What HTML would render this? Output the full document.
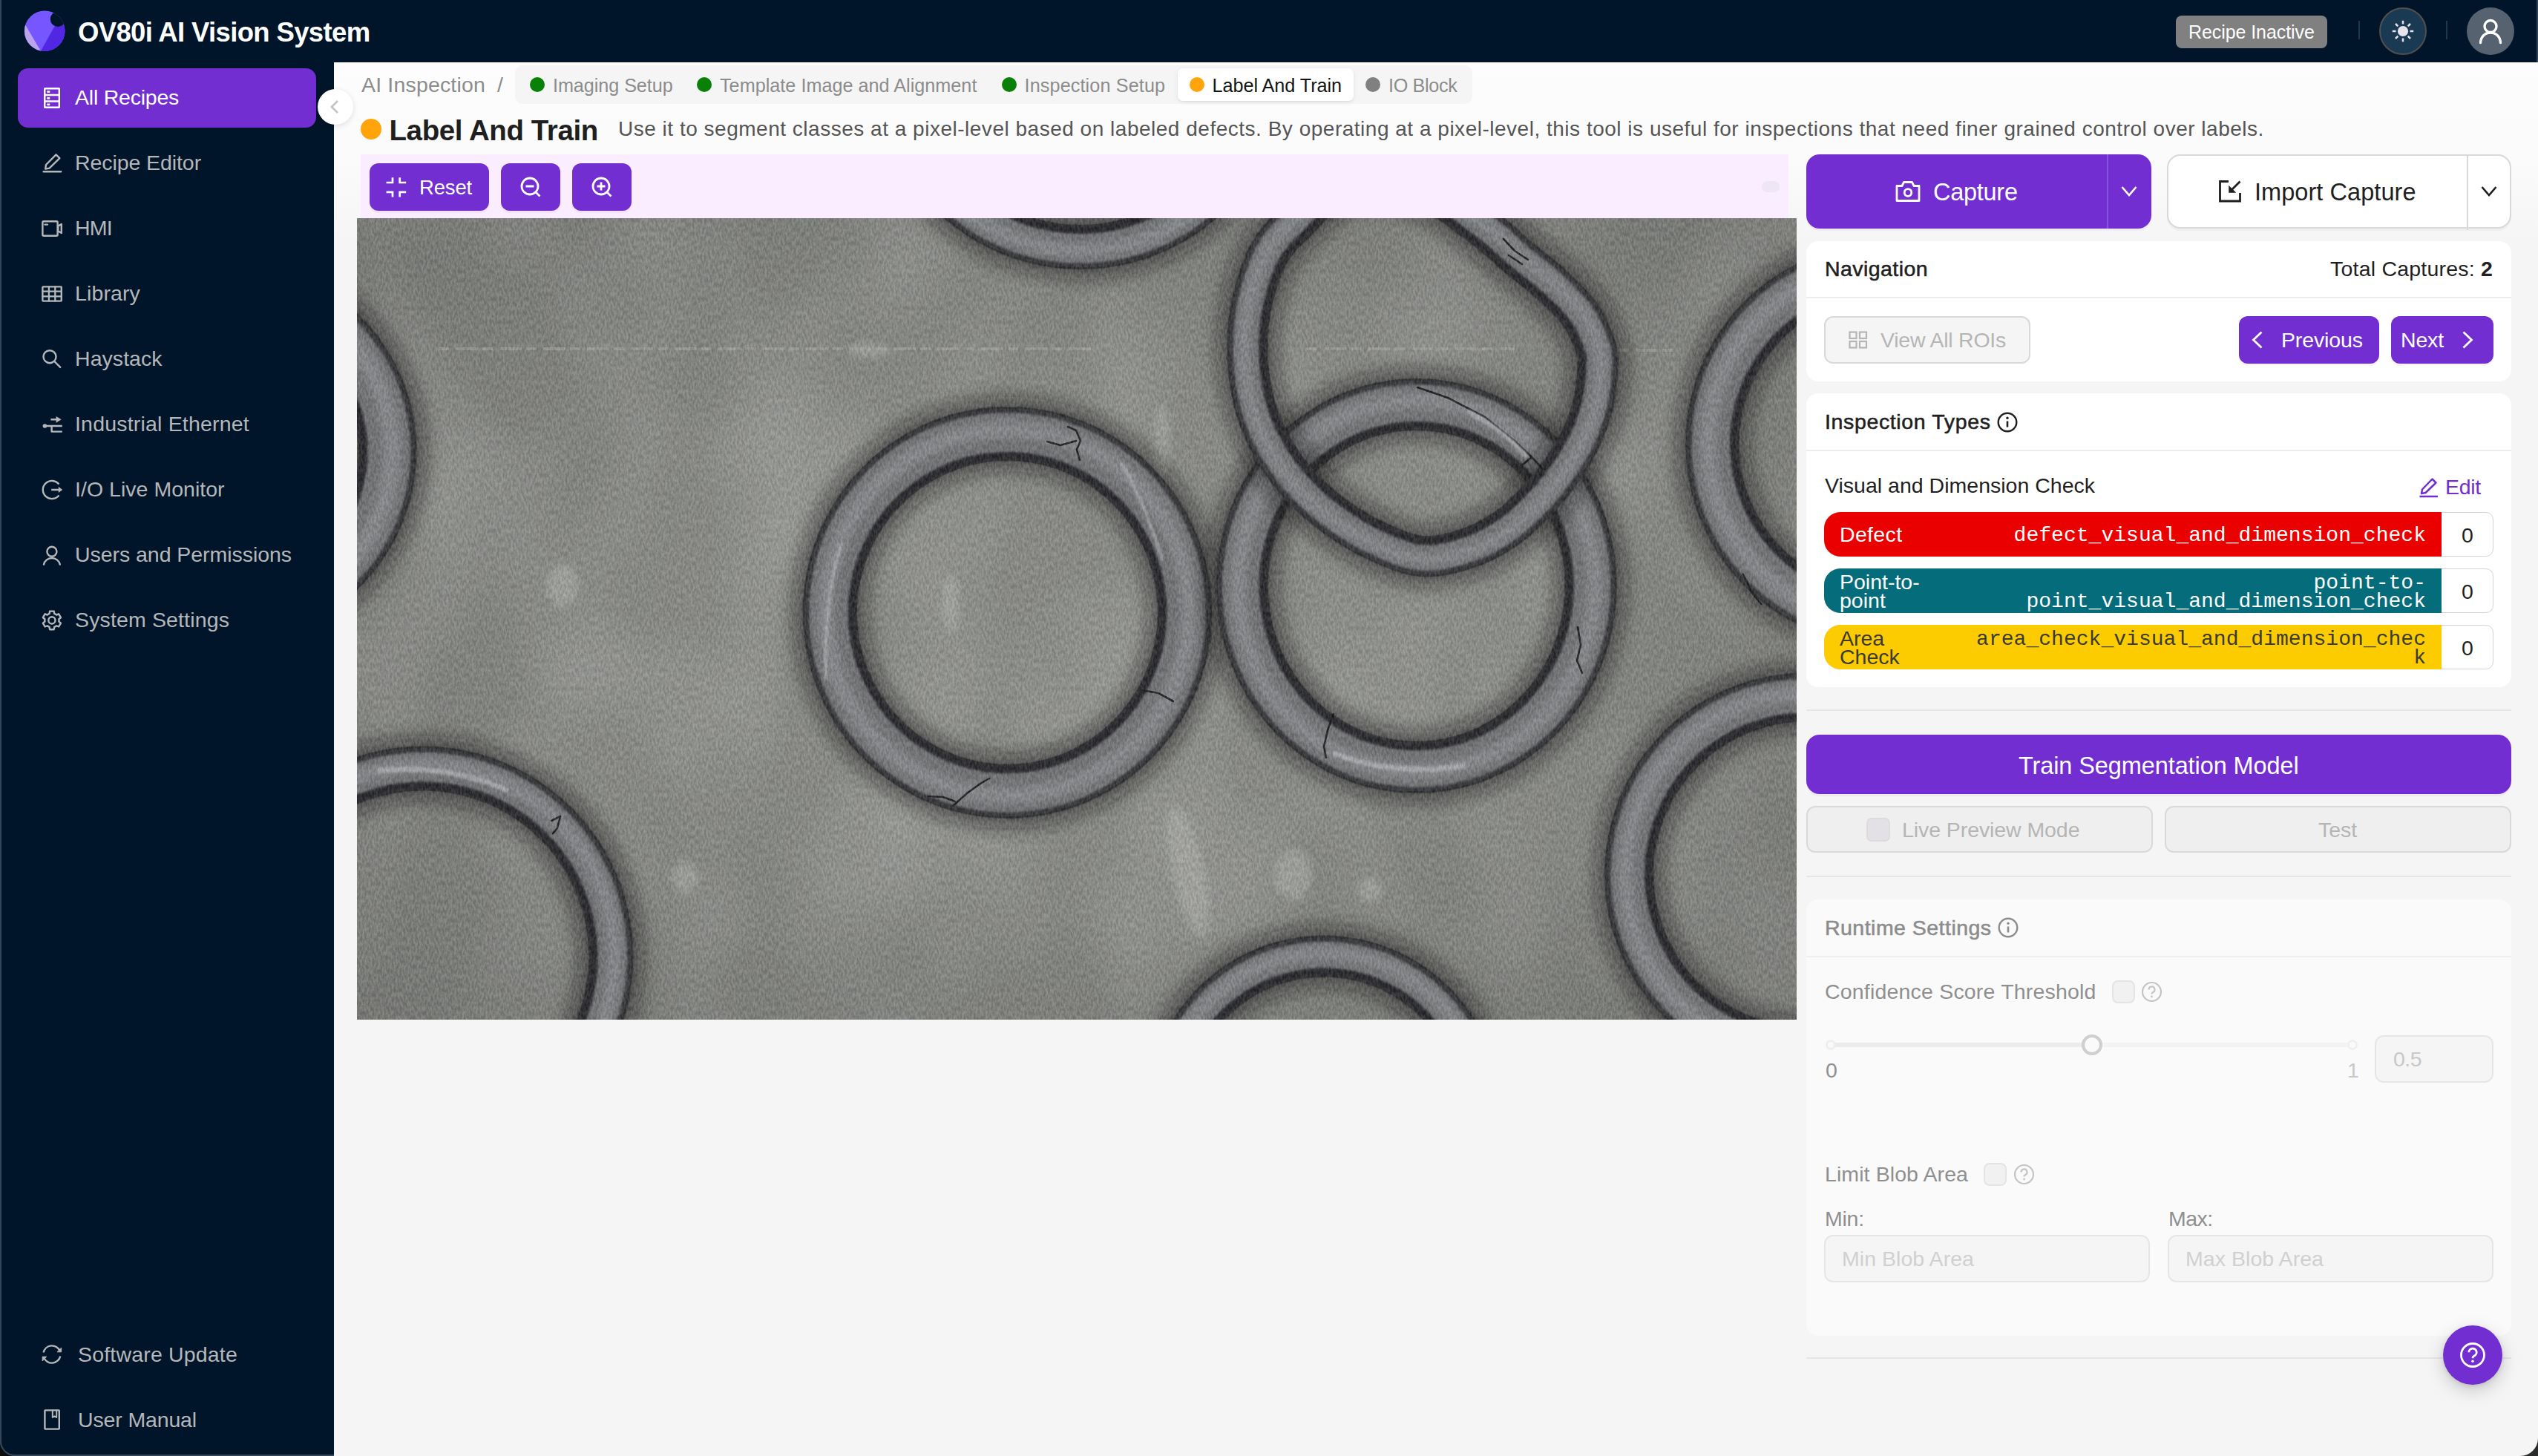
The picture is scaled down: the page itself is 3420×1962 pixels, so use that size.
<!DOCTYPE html>
<html>
<head>
<meta charset="utf-8">
<title>OV80i AI Vision System</title>
<style>
*{box-sizing:border-box;margin:0;padding:0}
html,body{width:3420px;height:1962px;overflow:hidden;background:#001529}
body{font-family:"Liberation Sans",sans-serif;position:relative;color:#1f1f1f}
.abs{position:absolute}
.t{position:absolute;white-space:nowrap;line-height:1}
svg{position:absolute;overflow:visible}
.mono{font-family:"Liberation Mono",monospace}
/* header */
#hdr{position:absolute;left:0;top:0;width:3420px;height:84px;background:#001529}
#side{position:absolute;left:0;top:84px;width:450px;height:1878px;background:#001529}
.mi{position:absolute;left:101px;color:#b5b7ba;font-size:28.5px;margin-top:-0.5px}
.ico{stroke:#b5b7ba;fill:none;stroke-width:2.4;stroke-linecap:round;stroke-linejoin:round}
#content{position:absolute;left:450px;top:84px;width:2970px;height:1878px;background:linear-gradient(#fdfdfd 0,#fbfbfb 120px,#f5f5f5 250px,#f5f5f5 100%)}
.dot{top:104px;width:20px;height:20px;border-radius:50%}
.sg{top:102.500px;font-size:25.2px;color:#8c8c8c}
.pbtn{position:absolute;background:#722ed1;border-radius:12px;box-shadow:0 3px 0 rgba(114,46,209,0.05)}
.card{position:absolute;background:#fff;border-radius:16px}
.hl{position:absolute;height:2px;background:#ececec}
.dis{position:absolute;background:#efefef;border:2px solid #d9d9d9;border-radius:12px}
.dtx{color:#b5b5b5}
.inp{position:absolute;background:#f5f5f5;border:2px solid #e6e6e6;border-radius:12px}
.cb{position:absolute;background:#f1f1f1;border:2px solid #e4e4e4;border-radius:8px}
@media (max-width:1800px){html{zoom:0.5}}
</style>
</head>
<body>
<!--HEADER-->
<div id="hdr">
<svg style="left:32px;top:14px" width="56" height="56" viewBox="32 14 56 56">
<defs><clipPath id="lg"><circle cx="60.2" cy="41.8" r="27.3"/></clipPath></defs>
<g clip-path="url(#lg)">
<rect x="32" y="14" width="56" height="56" fill="#7657ff"/>
<polygon points="30,27 34.300,33.800 54.900,68.700 40,72 28,60" fill="#bba3ee"/>
<polygon points="54.900,68.700 73.400,35.700 90,30 90,72 56,72" fill="#5227e3"/>
<circle cx="78" cy="25.800" r="10.200" fill="#001529"/>
</g></svg>
<span class="t" id="ttl" style="letter-spacing:-0.65px;;;;left:105px;top:25.5px;font-size:36.5px;font-weight:bold;color:#fff">OV80i AI Vision System</span>
<div class="abs" style="left:2932px;top:21px;width:204px;height:44px;border-radius:8px;background:#808080"></div>
<span class="t" id="rin" style="letter-spacing:-0.08px;;;;left:2949px;top:31px;font-size:25px;color:#fff">Recipe Inactive</span>
<div class="abs" style="left:3178px;top:28px;width:2px;height:25px;background:#1b3a50"></div>
<div class="abs" style="left:3206px;top:10px;width:64px;height:64px;border-radius:50%;background:#193a52;border:2px solid #544e4c"></div>
<svg style="left:3222px;top:26px" width="32" height="32" viewBox="0 0 32 32"><circle cx="16" cy="16" r="7.100" fill="#e6e3ee"/><g stroke="#e6e3ee" stroke-width="2.500" stroke-linecap="butt"><path d="M16 1.800v4.700M16 25.500v4.700M1.800 16h4.700M25.500 16h4.700M6 6l3.300 3.300M22.700 22.700l3.300 3.300M6 26l3.300-3.300M22.700 9.300l3.300-3.300"/></g></svg>
<div class="abs" style="left:3296px;top:28px;width:2px;height:25px;background:#1b3a50"></div>
<div class="abs" style="left:3324px;top:10px;width:64px;height:64px;border-radius:50%;background:#566270"></div>
<svg style="left:3338px;top:24px" width="36" height="36" viewBox="0 0 36 36"><g fill="none" stroke="#fff" stroke-width="3.4" stroke-linecap="round"><circle cx="18" cy="11.5" r="8"/><path d="M4.5 33.5c0.5-8 6-13.5 13.5-13.5s13 5.500 13.5 13.500"/></g></svg>
</div>
<!--SIDEBAR-->
<div id="side" style="top:84px">
<div class="abs" style="left:24px;top:8px;width:402px;height:80px;border-radius:14px;background:#722ed1"></div>
<span class="t mi" id="m0" style="letter-spacing:-0.23px;;;;top:33.8px;color:#fff">All Recipes</span>
<span class="t mi" id="m1" style="letter-spacing:-0.08px;;;;top:121.8px;color:#b5b7ba">Recipe Editor</span>
<span class="t mi" id="m2" style="letter-spacing:-0.82px;;;;top:209.8px;color:#b5b7ba">HMI</span>
<span class="t mi" id="m3" style="letter-spacing:0.12px;;;;top:297.8px;color:#b5b7ba">Library</span>
<span class="t mi" id="m4" style="letter-spacing:0.05px;;;;top:385.8px;color:#b5b7ba">Haystack</span>
<span class="t mi" id="m5" style="letter-spacing:0.19px;;;;top:473.8px;color:#b5b7ba">Industrial Ethernet</span>
<span class="t mi" id="m6" style="letter-spacing:0.03px;;;;top:561.8px;color:#b5b7ba">I/O Live Monitor</span>
<span class="t mi" id="m7" style="letter-spacing:-0.05px;;;;top:649.8px;color:#b5b7ba">Users and Permissions</span>
<span class="t mi" id="m8" style="letter-spacing:0.14px;;;;top:737.8px;color:#b5b7ba">System Settings</span>
<span class="t mi" id="m9" style="letter-spacing:0.18px;;;;left:105px;top:1727.8px">Software Update</span>
<span class="t mi" id="m10" style="letter-spacing:-0.14px;;;;left:105px;top:1815.8px">User Manual</span>
<svg style="left:0;top:0" width="450" height="1878" viewBox="0 84 450 1878"><g class="ico"><g stroke="#fff"><rect x="60.2" y="119.2" width="19.6" height="25.6" rx="0.5"/><path d="M60.2 128h19.6M60.2 136.5h19.6" /><path d="M64.5 123.7h1.6M64.5 132.3h1.6M64.5 140.8h1.6" stroke-width="2.8"/></g><path d="M75.5 208.3L80.4 213.2L66.6 226.6L61.2 227.6L62 222.0Z M58.6 231.3H82.2" /><rect x="57.4" y="298.3" width="20.2" height="19.4" rx="1.5"/><path d="M78.3 304.6L82.8 302V314L78.3 311.4Z M60.5 302.6h3.4"/><rect x="57.4" y="386.4" width="25.4" height="19.2" rx="0.8"/><path d="M65.9 386.4v19.200M74.3 386.4v19.2M57.4 392.6h25.400M57.4 399.300h25.4" stroke-width="2.3"/><circle cx="67" cy="480.7" r="8.5"/><path d="M73.3 487L81.200 494.900"/><circle cx="60.400" cy="574" r="2.8" fill="#b5b7ba" stroke="none"/><path d="M60.4 574H83.8M68.4 565.3H77M69.6 574V581.6H83.8" stroke-linecap="butt"/><path d="M75.6 560.900L82.6 565.3L75.6 569.800Z" fill="#b5b7ba" stroke="none"/><path d="M79.43 652.55A12.1 12.1 0 1 0 79.43 667.45 M69.2 660H79.500" stroke-linecap="butt"/><path d="M78.800 655.800L84.200 660L78.800 664.100Z" fill="#b5b7ba" stroke="none"/><circle cx="69.9" cy="743.2" r="6.5"/><path d="M59 760.600A11.2 11.2 0 0 1 80.800 760.600"/><path d="M65.10 827.59 L66.62 826.88 L67.07 823.62 L72.73 823.62 L73.18 826.88 L74.70 827.59 L76.07 828.55 L79.12 827.31 L81.95 832.22 L79.35 834.23 L79.50 835.90 L79.35 837.57 L81.95 839.58 L79.12 844.49 L76.07 843.25 L74.70 844.21 L73.18 844.92 L72.73 848.18 L67.07 848.18 L66.62 844.92 L65.10 844.21 L63.73 843.25 L60.68 844.49 L57.85 839.58 L60.45 837.57 L60.30 835.90 L60.45 834.23 L57.85 832.22 L60.68 827.31 L63.73 828.55Z" stroke-width="2.4"/><circle cx="69.9" cy="835.9" r="4.6"/><path d="M58.55 1822.59A11.6 11.6 0 0 1 80.66 1820.65 M81.25 1827.41A11.6 11.6 0 0 1 59.14 1829.35" stroke-linecap="butt"/><path d="M82.600 1816.400V1821.800H77.400Z M57.200 1833.600V1828.200H62.400Z" fill="#b5b7ba" stroke-width="1"/><rect x="60.4" y="1900.400" width="19.4" height="25.2" rx="0.5"/><path d="M70.8 1900.4V1910L73.500 1908.300L76.200 1910V1900.400" stroke-width="2"/></g></svg>
</div>
<!--CONTENT-->
<div id="content"></div>
<!--MAIN-->
<span class="t" id="bc" style="letter-spacing:0.17px;;;;left:487px;top:100px;font-size:28.5px;color:#8c8c8c">AI Inspection</span>
<span class="t" id="bcs" style="left:670px;top:100px;font-size:28.5px;color:#8c8c8c">/</span>
<div class="abs" style="left:694px;top:88px;width:1290px;height:52px;border-radius:10px;background:#f5f5f5"></div>
<div class="abs" style="left:1587px;top:92px;width:237px;height:44px;border-radius:7px;background:#fff;box-shadow:0 2px 6px rgba(0,0,0,0.07),0 1px 2px rgba(0,0,0,0.05)"></div>
<div class="abs dot" style="left:714px;background:#098109"></div>
<span class="t sg" id="s1" style="letter-spacing:-0.06px;;;;left:745px">Imaging Setup</span>
<div class="abs dot" style="left:939px;background:#098109"></div>
<span class="t sg" id="s2" style="letter-spacing:0.02px;;;;left:970px">Template Image and Alignment</span>
<div class="abs dot" style="left:1350px;background:#098109"></div>
<span class="t sg" id="s3" style="letter-spacing:0.13px;;;;left:1380.5px">Inspection Setup</span>
<div class="abs dot" style="left:1603px;background:#ffa40a"></div>
<span class="t sg" id="s4" style="letter-spacing:-0.03px;;;;left:1633.5px;color:#141414">Label And Train</span>
<div class="abs dot" style="left:1840px;background:#808080"></div>
<span class="t sg" id="s5" style="letter-spacing:-0.34px;;;;left:1871px">IO Block</span>
<div class="abs" style="left:486px;top:160px;width:28px;height:28px;border-radius:50%;background:#ffa40a"></div>
<span class="t" id="h1" style="letter-spacing:-0.4px;;;;left:524.500px;top:156.500px;font-size:38.500px;font-weight:bold;color:#1f1f1f">Label And Train</span>
<span class="t" id="desc" style="letter-spacing:0.51px;;;;left:833px;top:160px;font-size:28px;color:#555">Use it to segment classes at a pixel-level based on labeled defects. By operating at a pixel-level, this tool is useful for inspections that need finer grained control over labels.</span>
<div class="abs" style="left:486px;top:208px;width:1924px;height:86px;background:#faedff"></div>
<div class="pbtn" style="left:498px;top:220px;width:161px;height:64px"></div>
<div class="pbtn" style="left:675px;top:220px;width:80px;height:64px"></div>
<div class="pbtn" style="left:771px;top:220px;width:80px;height:64px"></div>
<svg style="left:519px;top:238px" width="30" height="28" viewBox="0 0 30 28"><g fill="none" stroke="#fff" stroke-width="2.700"><path d="M1.600 8H10V1.200M28.200 8H19.700V1.200M1.600 20.900H10V27.400M28.200 20.900H19.700V27.400"/></g></svg>
<span class="t" id="rst" style="letter-spacing:-0.15px;;;;left:565px;top:238.500px;font-size:27.5px;color:#fff">Reset</span>
<svg style="left:700px;top:237px" width="30" height="30" viewBox="0 0 30 30"><g fill="none" stroke="#fff" stroke-width="2.800"><circle cx="14" cy="14" r="11"/><path d="M8.500 14H19.500M22 22L27.500 27.500"/></g></svg>
<svg style="left:796px;top:237px" width="30" height="30" viewBox="0 0 30 30"><g fill="none" stroke="#fff" stroke-width="2.800"><circle cx="14" cy="14" r="11"/><path d="M8.500 14H19.500M14 8.500V19.500M22 22L27.500 27.500"/></g></svg>
<div class="abs" style="left:2374px;top:244px;width:24px;height:15px;border-radius:7px;background:#efe6f5"></div>
<div class="abs" style="left:428px;top:120px;width:48px;height:48px;border-radius:50%;background:#fff;box-shadow:0 2px 8px rgba(0,0,0,0.12)"></div>
<svg style="left:444px;top:134px" width="14" height="20" viewBox="0 0 14 20"><path d="M11 2L3 10L11 18" fill="none" stroke="#c4c4c4" stroke-width="2.800"/></svg>
<!--IMGSTART-->
<svg style="left:481px;top:294px;overflow:hidden" width="1940" height="1080" viewBox="0 0 1940 1080">
<defs>
<filter id="b14" x="-20%" y="-20%" width="140%" height="140%"><feGaussianBlur stdDeviation="11"/></filter>
<filter id="b6" x="-20%" y="-20%" width="140%" height="140%"><feGaussianBlur stdDeviation="5"/></filter>
<filter id="b2" x="-20%" y="-20%" width="140%" height="140%"><feGaussianBlur stdDeviation="1.6"/></filter>
<filter id="b40" x="-50%" y="-50%" width="200%" height="200%"><feGaussianBlur stdDeviation="14"/></filter>
<filter id="nz" color-interpolation-filters="sRGB" x="0" y="0" width="100%" height="100%"><feTurbulence type="fractalNoise" baseFrequency="0.38 0.16" numOctaves="3" seed="7" result="n"/><feColorMatrix in="n" type="matrix" values="2.2 0 0 0 -0.6  2.2 0 0 0 -0.6  2.2 0 0 0 -0.6  0 0 0 0 1"/></filter>
<filter id="nz2" color-interpolation-filters="sRGB" x="0" y="0" width="100%" height="100%"><feTurbulence type="fractalNoise" baseFrequency="0.006 0.004" numOctaves="2" seed="3" result="n"/><feColorMatrix in="n" type="matrix" values="0 0 0 0 1  0 0 0 0 1  0 0 0 0 1  1.6 0 0 0 -0.62"/></filter>
<radialGradient id="vg" cx="0.5" cy="0.5" r="0.75"><stop offset="0.35" stop-color="#000" stop-opacity="0"/><stop offset="1" stop-color="#000" stop-opacity="0.16"/></radialGradient>
</defs>
<rect width="1940" height="1080" fill="#898b86"/>
<rect width="1940" height="1080" filter="url(#nz2)" opacity="0.2"/>
<rect width="1940" height="1080" fill="url(#vg)"/>
<g fill="#b4b6b0" opacity="0.5" filter="url(#b6)"><ellipse cx="277" cy="495" rx="22" ry="30"/><ellipse cx="442" cy="888" rx="18" ry="22"/><ellipse cx="1120" cy="880" rx="22" ry="90" transform="rotate(-12 1120 880)"/><ellipse cx="1262" cy="885" rx="26" ry="34"/><ellipse cx="1365" cy="905" rx="16" ry="16"/><ellipse cx="690" cy="178" rx="30" ry="10"/><ellipse cx="800" cy="520" rx="12" ry="40"/><ellipse cx="1085" cy="300" rx="10" ry="50"/></g>
<path d="M110 176H1000M1280 176H1560M1700 178H1780" stroke="#a9aba5" stroke-width="4" stroke-dasharray="14 9 30 6" opacity="0.55" fill="none"/>
<g fill="none">
<path d="M41.3 314.3L40.8 328.6L39.4 342.8L37.1 356.8L33.9 370.7L29.7 384.4L24.7 397.7L18.8 410.7L12.1 423.3L4.6 435.4L-3.7 447.0L-12.8 458.0L-22.6 468.4L-33.0 478.2L-44.0 487.3L-55.6 495.6L-67.7 503.1L-80.3 509.8L-93.3 515.7L-106.6 520.7L-120.3 524.9L-134.2 528.1L-148.2 530.4L-162.4 531.8L-176.7 532.3L-191.0 531.8L-205.2 530.4L-219.2 528.1L-233.1 524.9L-246.8 520.7L-260.1 515.7L-273.1 509.8L-285.7 503.1L-297.8 495.6L-309.4 487.3L-320.4 478.2L-330.8 468.4L-340.6 458.0L-349.7 447.0L-358.0 435.4L-365.5 423.3L-372.2 410.7L-378.1 397.7L-383.1 384.4L-387.3 370.7L-390.5 356.8L-392.8 342.8L-394.2 328.6L-394.7 314.3L-394.2 300.0L-392.8 285.8L-390.5 271.8L-387.3 257.9L-383.1 244.2L-378.1 230.9L-372.2 217.9L-365.5 205.3L-358.0 193.2L-349.7 181.6L-340.6 170.6L-330.8 160.2L-320.4 150.4L-309.4 141.3L-297.8 133.0L-285.7 125.5L-273.1 118.8L-260.1 112.9L-246.8 107.9L-233.1 103.7L-219.2 100.5L-205.2 98.2L-191.0 96.8L-176.7 96.3L-162.4 96.8L-148.2 98.2L-134.2 100.5L-120.3 103.7L-106.6 107.9L-93.3 112.9L-80.3 118.8L-67.7 125.5L-55.6 133.0L-44.0 141.3L-33.0 150.4L-22.6 160.2L-12.8 170.6L-3.7 181.6L4.6 193.2L12.1 205.3L18.8 217.9L24.7 230.9L29.7 244.2L33.9 257.9L37.1 271.8L39.4 285.8L40.8 300.0Z" stroke="#161717" stroke-opacity="0.5" stroke-width="105.0" filter="url(#b14)"/>
<path d="M41.3 314.3L40.8 328.6L39.4 342.8L37.1 356.8L33.9 370.7L29.7 384.4L24.7 397.7L18.8 410.7L12.1 423.3L4.6 435.4L-3.7 447.0L-12.8 458.0L-22.6 468.4L-33.0 478.2L-44.0 487.3L-55.6 495.6L-67.7 503.1L-80.3 509.8L-93.3 515.7L-106.6 520.7L-120.3 524.9L-134.2 528.1L-148.2 530.4L-162.4 531.8L-176.7 532.3L-191.0 531.8L-205.2 530.4L-219.2 528.1L-233.1 524.9L-246.8 520.7L-260.1 515.7L-273.1 509.8L-285.7 503.1L-297.8 495.6L-309.4 487.3L-320.4 478.2L-330.8 468.4L-340.6 458.0L-349.7 447.0L-358.0 435.4L-365.5 423.3L-372.2 410.7L-378.1 397.7L-383.1 384.4L-387.3 370.7L-390.5 356.8L-392.8 342.8L-394.2 328.6L-394.7 314.3L-394.2 300.0L-392.8 285.8L-390.5 271.8L-387.3 257.9L-383.1 244.2L-378.1 230.9L-372.2 217.9L-365.5 205.3L-358.0 193.2L-349.7 181.6L-340.6 170.6L-330.8 160.2L-320.4 150.4L-309.4 141.3L-297.8 133.0L-285.7 125.5L-273.1 118.8L-260.1 112.9L-246.8 107.9L-233.1 103.7L-219.2 100.5L-205.2 98.2L-191.0 96.8L-176.7 96.3L-162.4 96.8L-148.2 98.2L-134.2 100.5L-120.3 103.7L-106.6 107.9L-93.3 112.9L-80.3 118.8L-67.7 125.5L-55.6 133.0L-44.0 141.3L-33.0 150.4L-22.6 160.2L-12.8 170.6L-3.7 181.6L4.6 193.2L12.1 205.3L18.8 217.9L24.7 230.9L29.7 244.2L33.9 257.9L37.1 271.8L39.4 285.8L40.8 300.0Z" stroke="#343536" stroke-width="78.0"/>
<path d="M41.3 314.3L40.8 328.6L39.4 342.8L37.1 356.8L33.9 370.7L29.7 384.4L24.7 397.7L18.8 410.7L12.1 423.3L4.6 435.4L-3.7 447.0L-12.8 458.0L-22.6 468.4L-33.0 478.2L-44.0 487.3L-55.6 495.6L-67.7 503.1L-80.3 509.8L-93.3 515.7L-106.6 520.7L-120.3 524.9L-134.2 528.1L-148.2 530.4L-162.4 531.8L-176.7 532.3L-191.0 531.8L-205.2 530.4L-219.2 528.1L-233.1 524.9L-246.8 520.7L-260.1 515.7L-273.1 509.8L-285.7 503.1L-297.8 495.6L-309.4 487.3L-320.4 478.2L-330.8 468.4L-340.6 458.0L-349.7 447.0L-358.0 435.4L-365.5 423.3L-372.2 410.7L-378.1 397.7L-383.1 384.4L-387.3 370.7L-390.5 356.8L-392.8 342.8L-394.2 328.6L-394.7 314.3L-394.2 300.0L-392.8 285.8L-390.5 271.8L-387.3 257.9L-383.1 244.2L-378.1 230.9L-372.2 217.9L-365.5 205.3L-358.0 193.2L-349.7 181.6L-340.6 170.6L-330.8 160.2L-320.4 150.4L-309.4 141.3L-297.8 133.0L-285.7 125.5L-273.1 118.8L-260.1 112.9L-246.8 107.9L-233.1 103.7L-219.2 100.5L-205.2 98.2L-191.0 96.8L-176.7 96.3L-162.4 96.8L-148.2 98.2L-134.2 100.5L-120.3 103.7L-106.6 107.9L-93.3 112.9L-80.3 118.8L-67.7 125.5L-55.6 133.0L-44.0 141.3L-33.0 150.4L-22.6 160.2L-12.8 170.6L-3.7 181.6L4.6 193.2L12.1 205.3L18.8 217.9L24.7 230.9L29.7 244.2L33.9 257.9L37.1 271.8L39.4 285.8L40.8 300.0Z" stroke="#707274" stroke-width="72.0"/>
<path d="M47.3 314.3L46.8 329.0L45.4 343.5L43.0 358.0L39.7 372.3L35.4 386.3L30.2 400.0L24.2 413.4L17.3 426.3L9.5 438.7L1.0 450.7L-8.3 462.0L-18.3 472.7L-29.0 482.7L-40.3 492.0L-52.3 500.5L-64.7 508.3L-77.6 515.2L-91.0 521.2L-104.7 526.4L-118.7 530.7L-133.0 534.0L-147.5 536.4L-162.0 537.8L-176.7 538.3L-191.4 537.8L-205.9 536.4L-220.4 534.0L-234.7 530.7L-248.7 526.4L-262.4 521.2L-275.8 515.2L-288.7 508.3L-301.1 500.5L-313.1 492.0L-324.4 482.7L-335.1 472.7L-345.1 462.0L-354.4 450.7L-362.9 438.7L-370.7 426.3L-377.6 413.4L-383.6 400.0L-388.8 386.3L-393.1 372.3L-396.4 358.0L-398.8 343.5L-400.2 329.0L-400.7 314.3L-400.2 299.6L-398.8 285.1L-396.4 270.6L-393.1 256.3L-388.8 242.3L-383.6 228.6L-377.6 215.2L-370.7 202.3L-362.9 189.9L-354.4 177.9L-345.1 166.6L-335.1 155.9L-324.4 145.9L-313.1 136.6L-301.1 128.1L-288.7 120.3L-275.8 113.4L-262.4 107.4L-248.7 102.2L-234.7 97.9L-220.4 94.6L-205.9 92.2L-191.4 90.8L-176.7 90.3L-162.0 90.8L-147.5 92.2L-133.0 94.6L-118.7 97.9L-104.7 102.2L-91.0 107.4L-77.6 113.4L-64.7 120.3L-52.3 128.1L-40.3 136.6L-29.0 145.9L-18.3 155.9L-8.3 166.6L1.0 177.9L9.5 189.9L17.3 202.3L24.2 215.2L30.2 228.6L35.4 242.3L39.7 256.3L43.0 270.6L45.4 285.1L46.8 299.6Z" stroke="#9c9ea0" stroke-opacity="0.5" stroke-width="24.0" filter="url(#b6)"/>
<path d="M8.8 314.3L8.4 326.4L7.2 338.5L5.2 350.5L2.5 362.3L-1.0 373.9L-5.3 385.3L-10.3 396.3L-16.1 407.0L-22.5 417.4L-29.5 427.2L-37.2 436.6L-45.5 445.5L-54.4 453.8L-63.8 461.5L-73.6 468.5L-84.0 474.9L-94.7 480.7L-105.7 485.7L-117.1 490.0L-128.7 493.5L-140.5 496.2L-152.5 498.2L-164.6 499.4L-176.7 499.8L-188.8 499.4L-200.9 498.2L-212.9 496.2L-224.7 493.5L-236.3 490.0L-247.7 485.7L-258.7 480.7L-269.4 474.9L-279.8 468.5L-289.6 461.5L-299.0 453.8L-307.9 445.5L-316.2 436.6L-323.9 427.2L-330.9 417.4L-337.3 407.1L-343.1 396.3L-348.1 385.3L-352.4 373.9L-355.9 362.3L-358.6 350.5L-360.6 338.5L-361.8 326.4L-362.2 314.3L-361.8 302.2L-360.6 290.1L-358.6 278.1L-355.9 266.3L-352.4 254.7L-348.1 243.3L-343.1 232.3L-337.3 221.6L-330.9 211.2L-323.9 201.4L-316.2 192.0L-307.9 183.1L-299.0 174.8L-289.6 167.1L-279.8 160.1L-269.5 153.7L-258.7 147.9L-247.7 142.9L-236.3 138.6L-224.7 135.1L-212.9 132.4L-200.9 130.4L-188.8 129.2L-176.7 128.8L-164.6 129.2L-152.5 130.4L-140.5 132.4L-128.7 135.1L-117.1 138.6L-105.7 142.9L-94.7 147.9L-83.9 153.7L-73.6 160.1L-63.8 167.1L-54.4 174.8L-45.5 183.1L-37.2 192.0L-29.5 201.4L-22.5 211.2L-16.1 221.5L-10.3 232.3L-5.3 243.3L-1.0 254.7L2.5 266.3L5.2 278.1L7.2 290.1L8.4 302.2Z" stroke="#262829" stroke-opacity="1" stroke-width="11.5" filter="url(#b2)"/>
<path d="M75.8 314.3L75.3 330.8L73.6 347.3L70.9 363.6L67.2 379.7L62.4 395.5L56.6 410.9L49.8 426.0L42.0 440.6L33.2 454.6L23.6 468.0L13.1 480.8L1.8 492.8L-10.2 504.1L-23.0 514.6L-36.4 524.2L-50.4 533.0L-65.0 540.8L-80.1 547.6L-95.5 553.4L-111.3 558.2L-127.4 561.9L-143.7 564.6L-160.2 566.3L-176.7 566.8L-193.2 566.3L-209.7 564.6L-226.0 561.9L-242.1 558.2L-257.9 553.4L-273.3 547.6L-288.4 540.8L-302.9 533.0L-317.0 524.2L-330.4 514.6L-343.2 504.1L-355.2 492.8L-366.5 480.8L-377.0 468.0L-386.6 454.6L-395.4 440.6L-403.2 426.0L-410.0 410.9L-415.8 395.5L-420.6 379.7L-424.3 363.6L-427.0 347.3L-428.7 330.8L-429.2 314.3L-428.7 297.8L-427.0 281.3L-424.3 265.0L-420.6 248.9L-415.8 233.1L-410.0 217.7L-403.2 202.6L-395.4 188.1L-386.6 174.0L-377.0 160.6L-366.5 147.8L-355.2 135.8L-343.2 124.5L-330.4 114.0L-317.0 104.4L-303.0 95.6L-288.4 87.8L-273.3 81.0L-257.9 75.2L-242.1 70.4L-226.0 66.7L-209.7 64.0L-193.2 62.3L-176.7 61.8L-160.2 62.3L-143.7 64.0L-127.4 66.7L-111.3 70.4L-95.5 75.2L-80.1 81.0L-65.0 87.8L-50.4 95.6L-36.4 104.4L-23.0 114.0L-10.2 124.5L1.8 135.8L13.1 147.8L23.6 160.6L33.2 174.0L42.0 188.0L49.8 202.6L56.6 217.7L62.4 233.1L67.2 248.9L70.9 265.0L73.6 281.3L75.3 297.8Z" stroke="#2a2c2d" stroke-opacity="0.85" stroke-width="7.5" filter="url(#b2)"/>
<path d="M1224.8 -211.0L1224.3 -194.6L1222.7 -178.4L1220.0 -162.2L1216.3 -146.3L1211.5 -130.6L1205.8 -115.3L1199.0 -100.4L1191.3 -86.0L1182.7 -72.1L1173.1 -58.8L1162.8 -46.2L1151.6 -34.2L1139.6 -23.0L1127.0 -12.7L1113.7 -3.1L1099.8 5.5L1085.4 13.2L1070.5 20.0L1055.2 25.7L1039.5 30.5L1023.6 34.2L1007.4 36.9L991.2 38.5L974.8 39.0L958.4 38.5L942.2 36.9L926.0 34.2L910.1 30.5L894.4 25.7L879.1 20.0L864.2 13.2L849.8 5.5L835.9 -3.1L822.6 -12.7L810.0 -23.0L798.0 -34.2L786.8 -46.2L776.5 -58.8L766.9 -72.1L758.3 -86.0L750.6 -100.4L743.8 -115.3L738.1 -130.6L733.3 -146.3L729.6 -162.2L726.9 -178.4L725.3 -194.6L724.8 -211.0L725.3 -227.4L726.9 -243.6L729.6 -259.8L733.3 -275.7L738.1 -291.4L743.8 -306.7L750.6 -321.6L758.3 -336.0L766.9 -349.9L776.5 -363.2L786.8 -375.8L798.0 -387.8L810.0 -399.0L822.6 -409.3L835.9 -418.9L849.8 -427.5L864.2 -435.2L879.1 -442.0L894.4 -447.7L910.1 -452.5L926.0 -456.2L942.2 -458.9L958.4 -460.5L974.8 -461.0L991.2 -460.5L1007.4 -458.9L1023.6 -456.2L1039.5 -452.5L1055.2 -447.7L1070.5 -442.0L1085.4 -435.2L1099.8 -427.5L1113.7 -418.9L1127.0 -409.3L1139.6 -399.0L1151.6 -387.8L1162.8 -375.8L1173.1 -363.2L1182.7 -349.9L1191.3 -336.0L1199.0 -321.6L1205.8 -306.7L1211.5 -291.4L1216.3 -275.7L1220.0 -259.8L1222.7 -243.6L1224.3 -227.4Z" stroke="#161717" stroke-opacity="0.5" stroke-width="87.0" filter="url(#b14)"/>
<path d="M1224.8 -211.0L1224.3 -194.6L1222.7 -178.4L1220.0 -162.2L1216.3 -146.3L1211.5 -130.6L1205.8 -115.3L1199.0 -100.4L1191.3 -86.0L1182.7 -72.1L1173.1 -58.8L1162.8 -46.2L1151.6 -34.2L1139.6 -23.0L1127.0 -12.7L1113.7 -3.1L1099.8 5.5L1085.4 13.2L1070.5 20.0L1055.2 25.7L1039.5 30.5L1023.6 34.2L1007.4 36.9L991.2 38.5L974.8 39.0L958.4 38.5L942.2 36.9L926.0 34.2L910.1 30.5L894.4 25.7L879.1 20.0L864.2 13.2L849.8 5.5L835.9 -3.1L822.6 -12.7L810.0 -23.0L798.0 -34.2L786.8 -46.2L776.5 -58.8L766.9 -72.1L758.3 -86.0L750.6 -100.4L743.8 -115.3L738.1 -130.6L733.3 -146.3L729.6 -162.2L726.9 -178.4L725.3 -194.6L724.8 -211.0L725.3 -227.4L726.9 -243.6L729.6 -259.8L733.3 -275.7L738.1 -291.4L743.8 -306.7L750.6 -321.6L758.3 -336.0L766.9 -349.9L776.5 -363.2L786.8 -375.8L798.0 -387.8L810.0 -399.0L822.6 -409.3L835.9 -418.9L849.8 -427.5L864.2 -435.2L879.1 -442.0L894.4 -447.7L910.1 -452.5L926.0 -456.2L942.2 -458.9L958.4 -460.5L974.8 -461.0L991.2 -460.5L1007.4 -458.9L1023.6 -456.2L1039.5 -452.5L1055.2 -447.7L1070.5 -442.0L1085.4 -435.2L1099.8 -427.5L1113.7 -418.9L1127.0 -409.3L1139.6 -399.0L1151.6 -387.8L1162.8 -375.8L1173.1 -363.2L1182.7 -349.9L1191.3 -336.0L1199.0 -321.6L1205.8 -306.7L1211.5 -291.4L1216.3 -275.7L1220.0 -259.8L1222.7 -243.6L1224.3 -227.4Z" stroke="#343536" stroke-width="60.0"/>
<path d="M1224.8 -211.0L1224.3 -194.6L1222.7 -178.4L1220.0 -162.2L1216.3 -146.3L1211.5 -130.6L1205.8 -115.3L1199.0 -100.4L1191.3 -86.0L1182.7 -72.1L1173.1 -58.8L1162.8 -46.2L1151.6 -34.2L1139.6 -23.0L1127.0 -12.7L1113.7 -3.1L1099.8 5.5L1085.4 13.2L1070.5 20.0L1055.2 25.7L1039.5 30.5L1023.6 34.2L1007.4 36.9L991.2 38.5L974.8 39.0L958.4 38.5L942.2 36.9L926.0 34.2L910.1 30.5L894.4 25.7L879.1 20.0L864.2 13.2L849.8 5.5L835.9 -3.1L822.6 -12.7L810.0 -23.0L798.0 -34.2L786.8 -46.2L776.5 -58.8L766.9 -72.1L758.3 -86.0L750.6 -100.4L743.8 -115.3L738.1 -130.6L733.3 -146.3L729.6 -162.2L726.9 -178.4L725.3 -194.6L724.8 -211.0L725.3 -227.4L726.9 -243.6L729.6 -259.8L733.3 -275.7L738.1 -291.4L743.8 -306.7L750.6 -321.6L758.3 -336.0L766.9 -349.9L776.5 -363.2L786.8 -375.8L798.0 -387.8L810.0 -399.0L822.6 -409.3L835.9 -418.9L849.8 -427.5L864.2 -435.2L879.1 -442.0L894.4 -447.7L910.1 -452.5L926.0 -456.2L942.2 -458.9L958.4 -460.5L974.8 -461.0L991.2 -460.5L1007.4 -458.9L1023.6 -456.2L1039.5 -452.5L1055.2 -447.7L1070.5 -442.0L1085.4 -435.2L1099.8 -427.5L1113.7 -418.9L1127.0 -409.3L1139.6 -399.0L1151.6 -387.8L1162.8 -375.8L1173.1 -363.2L1182.7 -349.9L1191.3 -336.0L1199.0 -321.6L1205.8 -306.7L1211.5 -291.4L1216.3 -275.7L1220.0 -259.8L1222.7 -243.6L1224.3 -227.4Z" stroke="#707274" stroke-width="54.0"/>
<path d="M1229.4 -211.0L1228.8 -194.4L1227.2 -177.8L1224.5 -161.3L1220.7 -145.1L1215.9 -129.2L1210.0 -113.6L1203.1 -98.4L1195.3 -83.7L1186.5 -69.6L1176.8 -56.0L1166.2 -43.2L1154.8 -31.0L1142.6 -19.6L1129.8 -9.0L1116.2 0.7L1102.1 9.5L1087.4 17.3L1072.2 24.2L1056.6 30.1L1040.7 34.9L1024.5 38.7L1008.0 41.4L991.4 43.0L974.8 43.6L958.2 43.0L941.6 41.4L925.1 38.7L908.9 34.9L893.0 30.1L877.4 24.2L862.2 17.3L847.5 9.5L833.4 0.7L819.8 -9.0L807.0 -19.6L794.8 -31.0L783.4 -43.2L772.8 -56.0L763.1 -69.6L754.3 -83.7L746.5 -98.4L739.6 -113.6L733.7 -129.2L728.9 -145.1L725.1 -161.3L722.4 -177.8L720.8 -194.4L720.2 -211.0L720.8 -227.6L722.4 -244.2L725.1 -260.7L728.9 -276.9L733.7 -292.8L739.6 -308.4L746.5 -323.6L754.3 -338.3L763.1 -352.4L772.8 -366.0L783.4 -378.8L794.8 -391.0L807.0 -402.4L819.8 -413.0L833.4 -422.7L847.5 -431.5L862.2 -439.3L877.4 -446.2L893.0 -452.1L908.9 -456.9L925.1 -460.7L941.6 -463.4L958.2 -465.0L974.8 -465.6L991.4 -465.0L1008.0 -463.4L1024.5 -460.7L1040.7 -456.9L1056.6 -452.1L1072.2 -446.2L1087.4 -439.3L1102.1 -431.5L1116.2 -422.7L1129.8 -413.0L1142.6 -402.4L1154.8 -391.0L1166.2 -378.8L1176.8 -366.0L1186.5 -352.4L1195.3 -338.3L1203.1 -323.6L1210.0 -308.4L1215.9 -292.8L1220.7 -276.9L1224.5 -260.7L1227.2 -244.2L1228.8 -227.6Z" stroke="#9c9ea0" stroke-opacity="0.5" stroke-width="18.2" filter="url(#b6)"/>
<path d="M1201.3 -211.0L1200.8 -196.2L1199.4 -181.4L1196.9 -166.8L1193.6 -152.4L1189.3 -138.2L1184.1 -124.3L1177.9 -110.8L1171.0 -97.8L1163.1 -85.2L1154.5 -73.1L1145.1 -61.7L1135.0 -50.8L1124.1 -40.7L1112.7 -31.3L1100.6 -22.7L1088.0 -14.8L1075.0 -7.9L1061.5 -1.7L1047.6 3.5L1033.4 7.8L1019.0 11.1L1004.4 13.6L989.6 15.0L974.8 15.5L960.0 15.0L945.2 13.6L930.6 11.1L916.2 7.8L902.0 3.5L888.1 -1.7L874.6 -7.9L861.5 -14.8L849.0 -22.7L836.9 -31.3L825.5 -40.7L814.6 -50.8L804.5 -61.7L795.1 -73.1L786.5 -85.2L778.6 -97.8L771.7 -110.8L765.5 -124.3L760.3 -138.2L756.0 -152.4L752.7 -166.8L750.2 -181.4L748.8 -196.2L748.3 -211.0L748.8 -225.8L750.2 -240.6L752.7 -255.2L756.0 -269.6L760.3 -283.8L765.5 -297.7L771.7 -311.2L778.6 -324.2L786.5 -336.8L795.1 -348.9L804.5 -360.3L814.6 -371.2L825.5 -381.3L836.9 -390.7L849.0 -399.3L861.5 -407.2L874.6 -414.1L888.1 -420.3L902.0 -425.5L916.2 -429.8L930.6 -433.1L945.2 -435.6L960.0 -437.0L974.8 -437.5L989.6 -437.0L1004.4 -435.6L1019.0 -433.1L1033.4 -429.8L1047.6 -425.5L1061.5 -420.3L1075.0 -414.1L1088.0 -407.2L1100.6 -399.3L1112.7 -390.7L1124.1 -381.3L1135.0 -371.2L1145.1 -360.3L1154.5 -348.9L1163.1 -336.8L1171.0 -324.3L1177.9 -311.2L1184.1 -297.7L1189.3 -283.8L1193.6 -269.6L1196.9 -255.2L1199.4 -240.6L1200.8 -225.8Z" stroke="#262829" stroke-opacity="1" stroke-width="11.5" filter="url(#b2)"/>
<path d="M1250.3 -211.0L1249.7 -193.0L1247.9 -175.0L1245.0 -157.3L1240.9 -139.7L1235.7 -122.4L1229.3 -105.6L1221.9 -89.1L1213.4 -73.2L1203.9 -57.9L1193.4 -43.3L1181.9 -29.4L1169.6 -16.2L1156.4 -3.9L1142.5 7.6L1127.9 18.1L1112.5 27.6L1096.7 36.1L1080.2 43.5L1063.4 49.9L1046.1 55.1L1028.5 59.2L1010.8 62.1L992.8 63.9L974.8 64.5L956.8 63.9L938.8 62.1L921.1 59.2L903.5 55.1L886.2 49.9L869.4 43.5L852.9 36.1L837.0 27.6L821.7 18.1L807.1 7.6L793.2 -3.9L780.0 -16.2L767.7 -29.4L756.2 -43.3L745.7 -57.9L736.2 -73.3L727.7 -89.1L720.3 -105.6L713.9 -122.4L708.7 -139.7L704.6 -157.3L701.7 -175.0L699.9 -193.0L699.3 -211.0L699.9 -229.0L701.7 -247.0L704.6 -264.7L708.7 -282.3L713.9 -299.6L720.3 -316.4L727.7 -332.9L736.2 -348.7L745.7 -364.1L756.2 -378.7L767.7 -392.6L780.0 -405.8L793.2 -418.1L807.1 -429.6L821.7 -440.1L837.0 -449.6L852.9 -458.1L869.4 -465.5L886.2 -471.9L903.5 -477.1L921.1 -481.2L938.8 -484.1L956.8 -485.9L974.8 -486.5L992.8 -485.9L1010.8 -484.1L1028.5 -481.2L1046.1 -477.1L1063.4 -471.9L1080.2 -465.5L1096.7 -458.1L1112.5 -449.6L1127.9 -440.1L1142.5 -429.6L1156.4 -418.1L1169.6 -405.8L1181.9 -392.6L1193.4 -378.7L1203.9 -364.1L1213.4 -348.8L1221.9 -332.9L1229.3 -316.4L1235.7 -299.6L1240.9 -282.3L1245.0 -264.7L1247.9 -247.0L1249.7 -229.0Z" stroke="#2a2c2d" stroke-opacity="0.85" stroke-width="7.5" filter="url(#b2)"/>
<path d="M1115.7 531.4L1115.2 547.2L1113.7 562.9L1111.1 578.4L1107.5 593.8L1103.0 608.9L1097.5 623.6L1091.0 638.0L1083.7 651.9L1075.4 665.3L1066.3 678.1L1056.3 690.3L1045.6 701.8L1034.2 712.6L1022.1 722.6L1009.4 731.8L996.1 740.1L982.3 747.5L968.0 754.1L953.4 759.6L938.4 764.2L923.2 767.8L907.7 770.3L892.1 771.9L876.5 772.4L860.9 771.9L845.3 770.3L829.8 767.8L814.6 764.2L799.6 759.6L785.0 754.1L770.7 747.5L756.9 740.1L743.6 731.8L730.9 722.6L718.8 712.6L707.4 701.8L696.7 690.3L686.7 678.1L677.6 665.3L669.3 651.9L662.0 638.0L655.5 623.6L650.0 608.9L645.5 593.8L641.9 578.4L639.3 562.9L637.8 547.2L637.3 531.4L637.8 515.6L639.3 499.9L641.9 484.4L645.5 469.0L650.0 453.9L655.5 439.2L662.0 424.8L669.3 410.9L677.6 397.5L686.7 384.7L696.7 372.5L707.4 361.0L718.8 350.2L730.9 340.2L743.6 331.0L756.9 322.7L770.7 315.3L785.0 308.7L799.6 303.2L814.6 298.6L829.8 295.0L845.3 292.5L860.9 290.9L876.5 290.4L892.1 290.9L907.7 292.5L923.2 295.0L938.4 298.6L953.4 303.2L968.0 308.7L982.3 315.3L996.1 322.7L1009.4 331.0L1022.1 340.2L1034.2 350.2L1045.6 361.0L1056.3 372.5L1066.3 384.7L1075.4 397.5L1083.7 410.9L1091.0 424.8L1097.5 439.2L1103.0 453.9L1107.5 469.0L1111.1 484.4L1113.7 499.9L1115.2 515.6Z" stroke="#161717" stroke-opacity="0.5" stroke-width="100.0" filter="url(#b14)"/>
<path d="M1115.7 531.4L1115.2 547.2L1113.7 562.9L1111.1 578.4L1107.5 593.8L1103.0 608.9L1097.5 623.6L1091.0 638.0L1083.7 651.9L1075.4 665.3L1066.3 678.1L1056.3 690.3L1045.6 701.8L1034.2 712.6L1022.1 722.6L1009.4 731.8L996.1 740.1L982.3 747.5L968.0 754.1L953.4 759.6L938.4 764.2L923.2 767.8L907.7 770.3L892.1 771.9L876.5 772.4L860.9 771.9L845.3 770.3L829.8 767.8L814.6 764.2L799.6 759.6L785.0 754.1L770.7 747.5L756.9 740.1L743.6 731.8L730.9 722.6L718.8 712.6L707.4 701.8L696.7 690.3L686.7 678.1L677.6 665.3L669.3 651.9L662.0 638.0L655.5 623.6L650.0 608.9L645.5 593.8L641.9 578.4L639.3 562.9L637.8 547.2L637.3 531.4L637.8 515.6L639.3 499.9L641.9 484.4L645.5 469.0L650.0 453.9L655.5 439.2L662.0 424.8L669.3 410.9L677.6 397.5L686.7 384.7L696.7 372.5L707.4 361.0L718.8 350.2L730.9 340.2L743.6 331.0L756.9 322.7L770.7 315.3L785.0 308.7L799.6 303.2L814.6 298.6L829.8 295.0L845.3 292.5L860.9 290.9L876.5 290.4L892.1 290.9L907.7 292.5L923.2 295.0L938.4 298.6L953.4 303.2L968.0 308.7L982.3 315.3L996.1 322.7L1009.4 331.0L1022.1 340.2L1034.2 350.2L1045.6 361.0L1056.3 372.5L1066.3 384.7L1075.4 397.5L1083.7 410.9L1091.0 424.8L1097.5 439.2L1103.0 453.9L1107.5 469.0L1111.1 484.4L1113.7 499.9L1115.2 515.6Z" stroke="#343536" stroke-width="73.0"/>
<path d="M1115.7 531.4L1115.2 547.2L1113.7 562.9L1111.1 578.4L1107.5 593.8L1103.0 608.9L1097.5 623.6L1091.0 638.0L1083.7 651.9L1075.4 665.3L1066.3 678.1L1056.3 690.3L1045.6 701.8L1034.2 712.6L1022.1 722.6L1009.4 731.8L996.1 740.1L982.3 747.5L968.0 754.1L953.4 759.6L938.4 764.2L923.2 767.8L907.7 770.3L892.1 771.9L876.5 772.4L860.9 771.9L845.3 770.3L829.8 767.8L814.6 764.2L799.6 759.6L785.0 754.1L770.7 747.5L756.9 740.1L743.6 731.8L730.9 722.6L718.8 712.6L707.4 701.8L696.7 690.3L686.7 678.1L677.6 665.3L669.3 651.9L662.0 638.0L655.5 623.6L650.0 608.9L645.5 593.8L641.9 578.4L639.3 562.9L637.8 547.2L637.3 531.4L637.8 515.6L639.3 499.9L641.9 484.4L645.5 469.0L650.0 453.9L655.5 439.2L662.0 424.8L669.3 410.9L677.6 397.5L686.7 384.7L696.7 372.5L707.4 361.0L718.8 350.2L730.9 340.2L743.6 331.0L756.9 322.7L770.7 315.3L785.0 308.7L799.6 303.2L814.6 298.6L829.8 295.0L845.3 292.5L860.9 290.9L876.5 290.4L892.1 290.9L907.7 292.5L923.2 295.0L938.4 298.6L953.4 303.2L968.0 308.7L982.3 315.3L996.1 322.7L1009.4 331.0L1022.1 340.2L1034.2 350.2L1045.6 361.0L1056.3 372.5L1066.3 384.7L1075.4 397.5L1083.7 410.9L1091.0 424.8L1097.5 439.2L1103.0 453.9L1107.5 469.0L1111.1 484.4L1113.7 499.9L1115.2 515.6Z" stroke="#707274" stroke-width="67.0"/>
<path d="M1121.3 531.4L1120.8 547.5L1119.2 563.6L1116.6 579.5L1113.0 595.2L1108.3 610.7L1102.7 625.8L1096.1 640.5L1088.5 654.7L1080.1 668.4L1070.7 681.5L1060.6 694.0L1049.6 705.8L1037.9 716.8L1025.5 727.0L1012.5 736.4L998.9 745.0L984.8 752.6L970.2 759.2L955.2 764.9L939.9 769.6L924.3 773.3L908.5 775.9L892.5 777.5L876.5 778.0L860.5 777.5L844.5 775.9L828.7 773.3L813.1 769.6L797.8 764.9L782.8 759.2L768.2 752.6L754.1 745.0L740.5 736.4L727.5 727.0L715.1 716.8L703.4 705.8L692.4 694.0L682.3 681.5L672.9 668.4L664.5 654.7L656.9 640.5L650.3 625.8L644.7 610.7L640.0 595.2L636.4 579.5L633.8 563.6L632.2 547.5L631.7 531.4L632.2 515.3L633.8 499.2L636.4 483.3L640.0 467.6L644.7 452.1L650.3 437.0L656.9 422.3L664.5 408.1L672.9 394.4L682.3 381.3L692.4 368.8L703.4 357.0L715.1 346.0L727.5 335.8L740.5 326.4L754.1 317.8L768.2 310.2L782.8 303.6L797.8 297.9L813.1 293.2L828.7 289.5L844.5 286.9L860.5 285.3L876.5 284.8L892.5 285.3L908.5 286.9L924.3 289.5L939.9 293.2L955.2 297.9L970.2 303.6L984.8 310.2L998.9 317.8L1012.5 326.4L1025.5 335.8L1037.9 346.0L1049.6 357.0L1060.6 368.8L1070.7 381.3L1080.1 394.4L1088.5 408.1L1096.1 422.3L1102.7 437.0L1108.3 452.1L1113.0 467.6L1116.6 483.3L1119.2 499.2L1120.8 515.3Z" stroke="#9c9ea0" stroke-opacity="0.5" stroke-width="22.4" filter="url(#b6)"/>
<path d="M1085.7 531.4L1085.3 545.2L1083.9 559.0L1081.7 572.6L1078.6 586.1L1074.6 599.3L1069.7 612.2L1064.1 624.8L1057.6 637.0L1050.4 648.7L1042.4 659.9L1033.7 670.6L1024.3 680.7L1014.4 690.1L1003.8 698.9L992.6 706.9L981.0 714.2L968.9 720.7L956.5 726.4L943.7 731.2L930.6 735.2L917.3 738.4L903.8 740.6L890.2 741.9L876.5 742.4L862.8 741.9L849.2 740.6L835.7 738.4L822.4 735.2L809.3 731.2L796.5 726.4L784.1 720.7L772.0 714.2L760.4 706.9L749.2 698.9L738.6 690.1L728.7 680.7L719.3 670.6L710.6 659.9L702.6 648.7L695.4 637.0L688.9 624.8L683.3 612.2L678.4 599.3L674.4 586.1L671.3 572.6L669.1 559.0L667.7 545.2L667.3 531.4L667.7 517.6L669.1 503.8L671.3 490.2L674.4 476.7L678.4 463.5L683.3 450.6L688.9 438.0L695.4 425.8L702.6 414.1L710.6 402.9L719.3 392.2L728.7 382.1L738.6 372.7L749.2 363.9L760.4 355.9L772.0 348.6L784.1 342.1L796.5 336.4L809.3 331.6L822.4 327.6L835.7 324.4L849.2 322.2L862.8 320.9L876.5 320.4L890.2 320.9L903.8 322.2L917.3 324.4L930.6 327.6L943.7 331.6L956.5 336.4L968.9 342.1L981.0 348.6L992.6 355.9L1003.8 363.9L1014.4 372.7L1024.3 382.1L1033.7 392.2L1042.4 402.9L1050.4 414.1L1057.6 425.8L1064.1 438.0L1069.7 450.6L1074.6 463.5L1078.6 476.7L1081.7 490.2L1083.9 503.8L1085.3 517.6Z" stroke="#262829" stroke-opacity="1" stroke-width="11.5" filter="url(#b2)"/>
<path d="M1147.7 531.4L1147.1 549.2L1145.4 567.0L1142.5 584.6L1138.5 602.0L1133.3 619.1L1127.1 635.8L1119.8 652.1L1111.4 667.8L1102.1 683.0L1091.7 697.5L1080.5 711.3L1068.4 724.4L1055.4 736.6L1041.7 747.9L1027.3 758.3L1012.2 767.8L996.5 776.2L980.4 783.6L963.7 789.9L946.7 795.1L929.5 799.1L911.9 802.1L894.3 803.8L876.5 804.4L858.7 803.8L841.1 802.1L823.5 799.1L806.3 795.1L789.3 789.9L772.6 783.6L756.5 776.2L740.8 767.8L725.7 758.3L711.3 747.9L697.6 736.6L684.6 724.4L672.5 711.3L661.3 697.5L650.9 683.0L641.6 667.8L633.2 652.1L625.9 635.8L619.7 619.1L614.5 602.0L610.5 584.6L607.6 567.0L605.9 549.2L605.3 531.4L605.9 513.6L607.6 495.8L610.5 478.2L614.5 460.8L619.7 443.7L625.9 427.0L633.2 410.7L641.6 395.0L650.9 379.8L661.3 365.3L672.5 351.5L684.6 338.4L697.6 326.2L711.3 314.9L725.7 304.5L740.8 295.0L756.5 286.6L772.6 279.2L789.3 272.9L806.3 267.7L823.5 263.7L841.1 260.7L858.7 259.0L876.5 258.4L894.3 259.0L911.9 260.7L929.5 263.7L946.7 267.7L963.7 272.9L980.4 279.2L996.5 286.6L1012.2 295.0L1027.3 304.5L1041.7 314.9L1055.4 326.2L1068.4 338.4L1080.5 351.5L1091.7 365.3L1102.1 379.8L1111.4 395.0L1119.8 410.7L1127.1 427.0L1133.3 443.7L1138.5 460.8L1142.5 478.2L1145.4 495.8L1147.1 513.6Z" stroke="#2a2c2d" stroke-opacity="0.85" stroke-width="7.5" filter="url(#b2)"/>
<path d="M342.5 995.0L342.0 1011.6L340.3 1028.1L337.6 1044.5L333.9 1060.6L329.0 1076.5L323.2 1092.0L316.4 1107.1L308.5 1121.8L299.8 1135.8L290.1 1149.3L279.6 1162.1L268.3 1174.3L256.1 1185.6L243.3 1196.1L229.8 1205.8L215.8 1214.5L201.1 1222.4L186.0 1229.2L170.5 1235.0L154.6 1239.9L138.5 1243.6L122.1 1246.3L105.6 1248.0L89.0 1248.5L72.4 1248.0L55.9 1246.3L39.5 1243.6L23.4 1239.9L7.5 1235.0L-8.0 1229.2L-23.1 1222.4L-37.7 1214.5L-51.8 1205.8L-65.3 1196.1L-78.1 1185.6L-90.3 1174.3L-101.6 1162.1L-112.1 1149.3L-121.8 1135.8L-130.5 1121.8L-138.4 1107.1L-145.2 1092.0L-151.0 1076.5L-155.9 1060.6L-159.6 1044.5L-162.3 1028.1L-164.0 1011.6L-164.5 995.0L-164.0 978.4L-162.3 961.9L-159.6 945.5L-155.9 929.4L-151.0 913.5L-145.2 898.0L-138.4 882.9L-130.5 868.3L-121.8 854.2L-112.1 840.7L-101.6 827.9L-90.3 815.7L-78.1 804.4L-65.3 793.9L-51.8 784.2L-37.8 775.5L-23.1 767.6L-8.0 760.8L7.5 755.0L23.4 750.1L39.5 746.4L55.9 743.7L72.4 742.0L89.0 741.5L105.6 742.0L122.1 743.7L138.5 746.4L154.6 750.1L170.5 755.0L186.0 760.8L201.1 767.6L215.8 775.5L229.8 784.2L243.3 793.9L256.1 804.4L268.3 815.7L279.6 827.9L290.1 840.7L299.8 854.2L308.5 868.2L316.4 882.9L323.2 898.0L329.0 913.5L333.9 929.4L337.6 945.5L340.3 961.9L342.0 978.4Z" stroke="#161717" stroke-opacity="0.5" stroke-width="87.0" filter="url(#b14)"/>
<path d="M342.5 995.0L342.0 1011.6L340.3 1028.1L337.6 1044.5L333.9 1060.6L329.0 1076.5L323.2 1092.0L316.4 1107.1L308.5 1121.8L299.8 1135.8L290.1 1149.3L279.6 1162.1L268.3 1174.3L256.1 1185.6L243.3 1196.1L229.8 1205.8L215.8 1214.5L201.1 1222.4L186.0 1229.2L170.5 1235.0L154.6 1239.9L138.5 1243.6L122.1 1246.3L105.6 1248.0L89.0 1248.5L72.4 1248.0L55.9 1246.3L39.5 1243.6L23.4 1239.9L7.5 1235.0L-8.0 1229.2L-23.1 1222.4L-37.7 1214.5L-51.8 1205.8L-65.3 1196.1L-78.1 1185.6L-90.3 1174.3L-101.6 1162.1L-112.1 1149.3L-121.8 1135.8L-130.5 1121.8L-138.4 1107.1L-145.2 1092.0L-151.0 1076.5L-155.9 1060.6L-159.6 1044.5L-162.3 1028.1L-164.0 1011.6L-164.5 995.0L-164.0 978.4L-162.3 961.9L-159.6 945.5L-155.9 929.4L-151.0 913.5L-145.2 898.0L-138.4 882.9L-130.5 868.3L-121.8 854.2L-112.1 840.7L-101.6 827.9L-90.3 815.7L-78.1 804.4L-65.3 793.9L-51.8 784.2L-37.8 775.5L-23.1 767.6L-8.0 760.8L7.5 755.0L23.4 750.1L39.5 746.4L55.9 743.7L72.4 742.0L89.0 741.5L105.6 742.0L122.1 743.7L138.5 746.4L154.6 750.1L170.5 755.0L186.0 760.8L201.1 767.6L215.8 775.5L229.8 784.2L243.3 793.9L256.1 804.4L268.3 815.7L279.6 827.9L290.1 840.7L299.8 854.2L308.5 868.2L316.4 882.9L323.2 898.0L329.0 913.5L333.9 929.4L337.6 945.5L340.3 961.9L342.0 978.4Z" stroke="#343536" stroke-width="60.0"/>
<path d="M342.5 995.0L342.0 1011.6L340.3 1028.1L337.6 1044.5L333.9 1060.6L329.0 1076.5L323.2 1092.0L316.4 1107.1L308.5 1121.8L299.8 1135.8L290.1 1149.3L279.6 1162.1L268.3 1174.3L256.1 1185.6L243.3 1196.1L229.8 1205.8L215.8 1214.5L201.1 1222.4L186.0 1229.2L170.5 1235.0L154.6 1239.9L138.5 1243.6L122.1 1246.3L105.6 1248.0L89.0 1248.5L72.4 1248.0L55.9 1246.3L39.5 1243.6L23.4 1239.9L7.5 1235.0L-8.0 1229.2L-23.1 1222.4L-37.7 1214.5L-51.8 1205.8L-65.3 1196.1L-78.1 1185.6L-90.3 1174.3L-101.6 1162.1L-112.1 1149.3L-121.8 1135.8L-130.5 1121.8L-138.4 1107.1L-145.2 1092.0L-151.0 1076.5L-155.9 1060.6L-159.6 1044.5L-162.3 1028.1L-164.0 1011.6L-164.5 995.0L-164.0 978.4L-162.3 961.9L-159.6 945.5L-155.9 929.4L-151.0 913.5L-145.2 898.0L-138.4 882.9L-130.5 868.3L-121.8 854.2L-112.1 840.7L-101.6 827.9L-90.3 815.7L-78.1 804.4L-65.3 793.9L-51.8 784.2L-37.8 775.5L-23.1 767.6L-8.0 760.8L7.5 755.0L23.4 750.1L39.5 746.4L55.9 743.7L72.4 742.0L89.0 741.5L105.6 742.0L122.1 743.7L138.5 746.4L154.6 750.1L170.5 755.0L186.0 760.8L201.1 767.6L215.8 775.5L229.8 784.2L243.3 793.9L256.1 804.4L268.3 815.7L279.6 827.9L290.1 840.7L299.8 854.2L308.5 868.2L316.4 882.9L323.2 898.0L329.0 913.5L333.9 929.4L337.6 945.5L340.3 961.9L342.0 978.4Z" stroke="#707274" stroke-width="54.0"/>
<path d="M347.1 995.0L346.5 1011.9L344.9 1028.7L342.1 1045.3L338.3 1061.8L333.4 1078.0L327.4 1093.8L320.4 1109.1L312.5 1124.0L303.6 1138.4L293.7 1152.1L283.0 1165.2L271.5 1177.5L259.2 1189.0L246.1 1199.7L232.4 1209.6L218.0 1218.5L203.1 1226.4L187.8 1233.4L172.0 1239.4L155.8 1244.3L139.3 1248.1L122.7 1250.9L105.9 1252.5L89.0 1253.1L72.1 1252.5L55.3 1250.9L38.7 1248.1L22.2 1244.3L6.0 1239.4L-9.8 1233.4L-25.1 1226.4L-40.0 1218.5L-54.4 1209.6L-68.1 1199.7L-81.2 1189.0L-93.5 1177.5L-105.0 1165.2L-115.7 1152.1L-125.6 1138.4L-134.5 1124.0L-142.4 1109.1L-149.4 1093.8L-155.4 1078.0L-160.3 1061.8L-164.1 1045.3L-166.9 1028.7L-168.5 1011.9L-169.1 995.0L-168.5 978.1L-166.9 961.3L-164.1 944.7L-160.3 928.2L-155.4 912.0L-149.4 896.2L-142.4 880.9L-134.5 866.0L-125.6 851.6L-115.7 837.9L-105.0 824.8L-93.5 812.5L-81.2 801.0L-68.1 790.3L-54.4 780.4L-40.0 771.5L-25.1 763.6L-9.8 756.6L6.0 750.6L22.2 745.7L38.7 741.9L55.3 739.1L72.1 737.5L89.0 736.9L105.9 737.5L122.7 739.1L139.3 741.9L155.8 745.7L172.0 750.6L187.8 756.6L203.1 763.6L218.0 771.5L232.4 780.4L246.1 790.3L259.2 801.0L271.5 812.5L283.0 824.8L293.7 837.9L303.6 851.6L312.5 866.0L320.4 880.9L327.4 896.2L333.4 912.0L338.3 928.2L342.1 944.7L344.9 961.3L346.5 978.1Z" stroke="#9c9ea0" stroke-opacity="0.5" stroke-width="18.2" filter="url(#b6)"/>
<path d="M319.0 995.0L318.5 1010.0L317.0 1025.0L314.6 1039.9L311.2 1054.5L306.8 1068.9L301.5 1083.0L295.3 1096.7L288.2 1110.0L280.2 1122.8L271.5 1135.0L261.9 1146.6L251.6 1157.6L240.6 1167.9L229.0 1177.5L216.8 1186.2L204.0 1194.2L190.7 1201.3L177.0 1207.5L162.9 1212.8L148.5 1217.2L133.9 1220.6L119.0 1223.0L104.0 1224.5L89.0 1225.0L74.0 1224.5L59.0 1223.0L44.1 1220.6L29.5 1217.2L15.1 1212.8L1.0 1207.5L-12.7 1201.3L-26.0 1194.2L-38.8 1186.2L-51.0 1177.5L-62.6 1167.9L-73.6 1157.6L-83.9 1146.6L-93.5 1135.0L-102.2 1122.8L-110.2 1110.0L-117.3 1096.7L-123.5 1083.0L-128.8 1068.9L-133.2 1054.5L-136.6 1039.9L-139.0 1025.0L-140.5 1010.0L-141.0 995.0L-140.5 980.0L-139.0 965.0L-136.6 950.1L-133.2 935.5L-128.8 921.1L-123.5 907.0L-117.3 893.3L-110.2 880.0L-102.2 867.2L-93.5 855.0L-83.9 843.4L-73.6 832.4L-62.6 822.1L-51.0 812.5L-38.8 803.8L-26.0 795.8L-12.7 788.7L1.0 782.5L15.1 777.2L29.5 772.8L44.1 769.4L59.0 767.0L74.0 765.5L89.0 765.0L104.0 765.5L119.0 767.0L133.9 769.4L148.5 772.8L162.9 777.2L177.0 782.5L190.7 788.7L204.0 795.8L216.8 803.8L229.0 812.5L240.6 822.1L251.6 832.4L261.9 843.4L271.5 855.0L280.2 867.2L288.2 880.0L295.3 893.3L301.5 907.0L306.8 921.1L311.2 935.5L314.6 950.1L317.0 965.0L318.5 980.0Z" stroke="#262829" stroke-opacity="1" stroke-width="11.5" filter="url(#b2)"/>
<path d="M368.0 995.0L367.4 1013.2L365.6 1031.4L362.6 1049.4L358.5 1067.2L353.2 1084.7L346.8 1101.8L339.2 1118.4L330.6 1134.5L321.0 1150.0L310.3 1164.8L298.8 1179.0L286.3 1192.3L273.0 1204.8L258.8 1216.3L244.0 1227.0L228.5 1236.6L212.4 1245.2L195.8 1252.8L178.7 1259.2L161.2 1264.5L143.4 1268.6L125.4 1271.6L107.2 1273.4L89.0 1274.0L70.8 1273.4L52.6 1271.6L34.6 1268.6L16.8 1264.5L-0.7 1259.2L-17.8 1252.8L-34.4 1245.2L-50.5 1236.6L-66.0 1227.0L-80.8 1216.3L-95.0 1204.8L-108.3 1192.3L-120.8 1179.0L-132.3 1164.8L-143.0 1150.0L-152.6 1134.5L-161.2 1118.4L-168.8 1101.8L-175.2 1084.7L-180.5 1067.2L-184.6 1049.4L-187.6 1031.4L-189.4 1013.2L-190.0 995.0L-189.4 976.8L-187.6 958.6L-184.6 940.6L-180.5 922.8L-175.2 905.3L-168.8 888.2L-161.2 871.6L-152.6 855.5L-143.0 840.0L-132.3 825.2L-120.8 811.0L-108.3 797.7L-95.0 785.2L-80.8 773.7L-66.0 763.0L-50.5 753.4L-34.4 744.8L-17.8 737.2L-0.7 730.8L16.8 725.5L34.6 721.4L52.6 718.4L70.8 716.6L89.0 716.0L107.2 716.6L125.4 718.4L143.4 721.4L161.2 725.5L178.7 730.8L195.8 737.2L212.4 744.8L228.5 753.4L244.0 763.0L258.8 773.7L273.0 785.2L286.3 797.7L298.8 811.0L310.3 825.2L321.0 840.0L330.6 855.5L339.2 871.6L346.8 888.2L353.2 905.3L358.5 922.8L362.6 940.6L365.6 958.6L367.4 976.8Z" stroke="#2a2c2d" stroke-opacity="0.85" stroke-width="7.5" filter="url(#b2)"/>
<path d="M1514.5 1206.0L1514.0 1219.8L1512.7 1233.6L1510.4 1247.3L1507.3 1260.7L1503.3 1274.0L1498.4 1286.9L1492.7 1299.5L1486.2 1311.8L1478.9 1323.5L1470.8 1334.8L1462.0 1345.5L1452.6 1355.6L1442.5 1365.0L1431.8 1373.8L1420.5 1381.9L1408.8 1389.2L1396.5 1395.7L1383.9 1401.4L1371.0 1406.3L1357.7 1410.3L1344.3 1413.4L1330.6 1415.7L1316.8 1417.0L1303.0 1417.5L1289.2 1417.0L1275.4 1415.7L1261.7 1413.4L1248.3 1410.3L1235.0 1406.3L1222.1 1401.4L1209.5 1395.7L1197.2 1389.2L1185.5 1381.9L1174.2 1373.8L1163.5 1365.0L1153.4 1355.6L1144.0 1345.5L1135.2 1334.8L1127.1 1323.5L1119.8 1311.8L1113.3 1299.5L1107.6 1286.9L1102.7 1274.0L1098.7 1260.7L1095.6 1247.3L1093.3 1233.6L1092.0 1219.8L1091.5 1206.0L1092.0 1192.2L1093.3 1178.4L1095.6 1164.7L1098.7 1151.3L1102.7 1138.0L1107.6 1125.1L1113.3 1112.5L1119.8 1100.2L1127.1 1088.5L1135.2 1077.2L1144.0 1066.5L1153.4 1056.4L1163.5 1047.0L1174.2 1038.2L1185.5 1030.1L1197.2 1022.8L1209.5 1016.3L1222.1 1010.6L1235.0 1005.7L1248.3 1001.7L1261.7 998.6L1275.4 996.3L1289.2 995.0L1303.0 994.5L1316.8 995.0L1330.6 996.3L1344.3 998.6L1357.7 1001.7L1371.0 1005.7L1383.9 1010.6L1396.5 1016.3L1408.8 1022.8L1420.5 1030.1L1431.8 1038.2L1442.5 1047.0L1452.6 1056.4L1462.0 1066.5L1470.8 1077.2L1478.9 1088.5L1486.2 1100.2L1492.7 1112.5L1498.4 1125.1L1503.3 1138.0L1507.3 1151.3L1510.4 1164.7L1512.7 1178.4L1514.0 1192.2Z" stroke="#161717" stroke-opacity="0.5" stroke-width="83.0" filter="url(#b14)"/>
<path d="M1514.5 1206.0L1514.0 1219.8L1512.7 1233.6L1510.4 1247.3L1507.3 1260.7L1503.3 1274.0L1498.4 1286.9L1492.7 1299.5L1486.2 1311.8L1478.9 1323.5L1470.8 1334.8L1462.0 1345.5L1452.6 1355.6L1442.5 1365.0L1431.8 1373.8L1420.5 1381.9L1408.8 1389.2L1396.5 1395.7L1383.9 1401.4L1371.0 1406.3L1357.7 1410.3L1344.3 1413.4L1330.6 1415.7L1316.8 1417.0L1303.0 1417.5L1289.2 1417.0L1275.4 1415.7L1261.7 1413.4L1248.3 1410.3L1235.0 1406.3L1222.1 1401.4L1209.5 1395.7L1197.2 1389.2L1185.5 1381.9L1174.2 1373.8L1163.5 1365.0L1153.4 1355.6L1144.0 1345.5L1135.2 1334.8L1127.1 1323.5L1119.8 1311.8L1113.3 1299.5L1107.6 1286.9L1102.7 1274.0L1098.7 1260.7L1095.6 1247.3L1093.3 1233.6L1092.0 1219.8L1091.5 1206.0L1092.0 1192.2L1093.3 1178.4L1095.6 1164.7L1098.7 1151.3L1102.7 1138.0L1107.6 1125.1L1113.3 1112.5L1119.8 1100.2L1127.1 1088.5L1135.2 1077.2L1144.0 1066.5L1153.4 1056.4L1163.5 1047.0L1174.2 1038.2L1185.5 1030.1L1197.2 1022.8L1209.5 1016.3L1222.1 1010.6L1235.0 1005.7L1248.3 1001.7L1261.7 998.6L1275.4 996.3L1289.2 995.0L1303.0 994.5L1316.8 995.0L1330.6 996.3L1344.3 998.6L1357.7 1001.7L1371.0 1005.7L1383.9 1010.6L1396.5 1016.3L1408.8 1022.8L1420.5 1030.1L1431.8 1038.2L1442.5 1047.0L1452.6 1056.4L1462.0 1066.5L1470.8 1077.2L1478.9 1088.5L1486.2 1100.2L1492.7 1112.5L1498.4 1125.1L1503.3 1138.0L1507.3 1151.3L1510.4 1164.7L1512.7 1178.4L1514.0 1192.2Z" stroke="#343536" stroke-width="56.0"/>
<path d="M1514.5 1206.0L1514.0 1219.8L1512.7 1233.6L1510.4 1247.3L1507.3 1260.7L1503.3 1274.0L1498.4 1286.9L1492.7 1299.5L1486.2 1311.8L1478.9 1323.5L1470.8 1334.8L1462.0 1345.5L1452.6 1355.6L1442.5 1365.0L1431.8 1373.8L1420.5 1381.9L1408.8 1389.2L1396.5 1395.7L1383.9 1401.4L1371.0 1406.3L1357.7 1410.3L1344.3 1413.4L1330.6 1415.7L1316.8 1417.0L1303.0 1417.5L1289.2 1417.0L1275.4 1415.7L1261.7 1413.4L1248.3 1410.3L1235.0 1406.3L1222.1 1401.4L1209.5 1395.7L1197.2 1389.2L1185.5 1381.9L1174.2 1373.8L1163.5 1365.0L1153.4 1355.6L1144.0 1345.5L1135.2 1334.8L1127.1 1323.5L1119.8 1311.8L1113.3 1299.5L1107.6 1286.9L1102.7 1274.0L1098.7 1260.7L1095.6 1247.3L1093.3 1233.6L1092.0 1219.8L1091.5 1206.0L1092.0 1192.2L1093.3 1178.4L1095.6 1164.7L1098.7 1151.3L1102.7 1138.0L1107.6 1125.1L1113.3 1112.5L1119.8 1100.2L1127.1 1088.5L1135.2 1077.2L1144.0 1066.5L1153.4 1056.4L1163.5 1047.0L1174.2 1038.2L1185.5 1030.1L1197.2 1022.8L1209.5 1016.3L1222.1 1010.6L1235.0 1005.7L1248.3 1001.7L1261.7 998.6L1275.4 996.3L1289.2 995.0L1303.0 994.5L1316.8 995.0L1330.6 996.3L1344.3 998.6L1357.7 1001.7L1371.0 1005.7L1383.9 1010.6L1396.5 1016.3L1408.8 1022.8L1420.5 1030.1L1431.8 1038.2L1442.5 1047.0L1452.6 1056.4L1462.0 1066.5L1470.8 1077.2L1478.9 1088.5L1486.2 1100.2L1492.7 1112.5L1498.4 1125.1L1503.3 1138.0L1507.3 1151.3L1510.4 1164.7L1512.7 1178.4L1514.0 1192.2Z" stroke="#707274" stroke-width="50.0"/>
<path d="M1518.7 1206.0L1518.3 1220.1L1516.9 1234.2L1514.6 1248.1L1511.4 1261.8L1507.3 1275.3L1502.3 1288.6L1496.5 1301.4L1489.8 1313.9L1482.4 1325.9L1474.2 1337.3L1465.2 1348.2L1455.6 1358.6L1445.2 1368.2L1434.3 1377.2L1422.9 1385.4L1410.9 1392.8L1398.4 1399.5L1385.6 1405.3L1372.3 1410.3L1358.8 1414.4L1345.1 1417.6L1331.2 1419.9L1317.1 1421.3L1303.0 1421.7L1288.9 1421.3L1274.8 1419.9L1260.9 1417.6L1247.2 1414.4L1233.7 1410.3L1220.4 1405.3L1207.6 1399.5L1195.1 1392.8L1183.1 1385.4L1171.7 1377.2L1160.8 1368.2L1150.4 1358.6L1140.8 1348.2L1131.8 1337.3L1123.6 1325.9L1116.2 1313.9L1109.5 1301.4L1103.7 1288.6L1098.7 1275.3L1094.6 1261.8L1091.4 1248.1L1089.1 1234.2L1087.7 1220.1L1087.3 1206.0L1087.7 1191.9L1089.1 1177.8L1091.4 1163.9L1094.6 1150.2L1098.7 1136.7L1103.7 1123.4L1109.5 1110.6L1116.2 1098.1L1123.6 1086.1L1131.8 1074.7L1140.8 1063.8L1150.4 1053.4L1160.8 1043.8L1171.7 1034.8L1183.1 1026.6L1195.1 1019.2L1207.6 1012.5L1220.4 1006.7L1233.7 1001.7L1247.2 997.6L1260.9 994.4L1274.8 992.1L1288.9 990.7L1303.0 990.3L1317.1 990.7L1331.2 992.1L1345.1 994.4L1358.8 997.6L1372.3 1001.7L1385.6 1006.7L1398.4 1012.5L1410.9 1019.2L1422.9 1026.6L1434.3 1034.8L1445.2 1043.8L1455.6 1053.4L1465.2 1063.8L1474.2 1074.7L1482.4 1086.1L1489.8 1098.1L1496.5 1110.6L1502.3 1123.4L1507.3 1136.7L1511.4 1150.2L1514.6 1163.9L1516.9 1177.8L1518.3 1191.9Z" stroke="#9c9ea0" stroke-opacity="0.5" stroke-width="17.0" filter="url(#b6)"/>
<path d="M1493.0 1206.0L1492.6 1218.4L1491.4 1230.8L1489.3 1243.1L1486.5 1255.2L1482.9 1267.1L1478.5 1278.7L1473.4 1290.0L1467.5 1301.0L1461.0 1311.6L1453.7 1321.7L1445.8 1331.3L1437.4 1340.4L1428.3 1348.8L1418.7 1356.7L1408.6 1364.0L1398.0 1370.5L1387.0 1376.4L1375.7 1381.5L1364.1 1385.9L1352.2 1389.5L1340.1 1392.3L1327.8 1394.4L1315.4 1395.6L1303.0 1396.0L1290.6 1395.6L1278.2 1394.4L1265.9 1392.3L1253.8 1389.5L1241.9 1385.9L1230.3 1381.5L1219.0 1376.4L1208.0 1370.5L1197.4 1364.0L1187.3 1356.7L1177.7 1348.8L1168.6 1340.4L1160.2 1331.3L1152.3 1321.7L1145.0 1311.6L1138.5 1301.0L1132.6 1290.0L1127.5 1278.7L1123.1 1267.1L1119.5 1255.2L1116.7 1243.1L1114.6 1230.8L1113.4 1218.4L1113.0 1206.0L1113.4 1193.6L1114.6 1181.2L1116.7 1168.9L1119.5 1156.8L1123.1 1144.9L1127.5 1133.3L1132.6 1122.0L1138.5 1111.0L1145.0 1100.4L1152.3 1090.3L1160.2 1080.7L1168.6 1071.6L1177.7 1063.2L1187.3 1055.3L1197.4 1048.0L1208.0 1041.5L1219.0 1035.6L1230.3 1030.5L1241.9 1026.1L1253.8 1022.5L1265.9 1019.7L1278.2 1017.6L1290.6 1016.4L1303.0 1016.0L1315.4 1016.4L1327.8 1017.6L1340.1 1019.7L1352.2 1022.5L1364.1 1026.1L1375.7 1030.5L1387.0 1035.6L1398.0 1041.5L1408.6 1048.0L1418.7 1055.3L1428.3 1063.2L1437.4 1071.6L1445.8 1080.7L1453.7 1090.3L1461.0 1100.4L1467.5 1111.0L1473.4 1122.0L1478.5 1133.3L1482.9 1144.9L1486.5 1156.8L1489.3 1168.9L1491.4 1181.2L1492.6 1193.6Z" stroke="#262829" stroke-opacity="1" stroke-width="11.5" filter="url(#b2)"/>
<path d="M1538.0 1206.0L1537.5 1221.4L1536.0 1236.7L1533.5 1251.8L1530.0 1266.8L1525.5 1281.5L1520.1 1295.9L1513.8 1309.9L1506.5 1323.5L1498.4 1336.6L1489.4 1349.1L1479.7 1360.9L1469.2 1372.2L1457.9 1382.7L1446.1 1392.4L1433.6 1401.4L1420.5 1409.5L1406.9 1416.8L1392.9 1423.1L1378.5 1428.5L1363.8 1433.0L1348.8 1436.5L1333.7 1439.0L1318.4 1440.5L1303.0 1441.0L1287.6 1440.5L1272.3 1439.0L1257.2 1436.5L1242.2 1433.0L1227.5 1428.5L1213.1 1423.1L1199.1 1416.8L1185.5 1409.5L1172.4 1401.4L1159.9 1392.4L1148.1 1382.7L1136.8 1372.2L1126.3 1360.9L1116.6 1349.1L1107.6 1336.6L1099.5 1323.5L1092.2 1309.9L1085.9 1295.9L1080.5 1281.5L1076.0 1266.8L1072.5 1251.8L1070.0 1236.7L1068.5 1221.4L1068.0 1206.0L1068.5 1190.6L1070.0 1175.3L1072.5 1160.2L1076.0 1145.2L1080.5 1130.5L1085.9 1116.1L1092.2 1102.1L1099.5 1088.5L1107.6 1075.4L1116.6 1062.9L1126.3 1051.1L1136.8 1039.8L1148.1 1029.3L1159.9 1019.6L1172.4 1010.6L1185.5 1002.5L1199.1 995.2L1213.1 988.9L1227.5 983.5L1242.2 979.0L1257.2 975.5L1272.3 973.0L1287.6 971.5L1303.0 971.0L1318.4 971.5L1333.7 973.0L1348.8 975.5L1363.8 979.0L1378.5 983.5L1392.9 988.9L1406.9 995.2L1420.5 1002.5L1433.6 1010.6L1446.1 1019.6L1457.9 1029.3L1469.2 1039.8L1479.7 1051.1L1489.4 1062.9L1498.4 1075.4L1506.5 1088.5L1513.8 1102.1L1520.1 1116.1L1525.5 1130.5L1530.0 1145.2L1533.5 1160.2L1536.0 1175.3L1537.5 1190.6Z" stroke="#2a2c2d" stroke-opacity="0.85" stroke-width="7.5" filter="url(#b2)"/>
<path d="M2297.2 304.0L2296.7 319.4L2295.2 334.7L2292.7 349.9L2289.2 365.0L2284.7 379.7L2279.3 394.1L2272.9 408.2L2265.6 421.8L2257.5 434.8L2248.5 447.4L2238.8 459.3L2228.2 470.5L2217.0 481.1L2205.1 490.8L2192.5 499.8L2179.4 507.9L2165.9 515.2L2151.8 521.6L2137.4 527.0L2122.7 531.5L2107.6 535.0L2092.4 537.5L2077.1 539.0L2061.7 539.5L2046.3 539.0L2031.0 537.5L2015.8 535.0L2000.7 531.5L1986.0 527.0L1971.6 521.6L1957.5 515.2L1943.9 507.9L1930.9 499.8L1918.3 490.8L1906.4 481.1L1895.2 470.5L1884.6 459.3L1874.9 447.4L1865.9 434.8L1857.8 421.8L1850.5 408.2L1844.1 394.1L1838.7 379.7L1834.2 365.0L1830.7 349.9L1828.2 334.7L1826.7 319.4L1826.2 304.0L1826.7 288.6L1828.2 273.3L1830.7 258.1L1834.2 243.0L1838.7 228.3L1844.1 213.9L1850.5 199.8L1857.8 186.3L1865.9 173.2L1874.9 160.6L1884.6 148.7L1895.2 137.5L1906.4 126.9L1918.3 117.2L1930.9 108.2L1943.9 100.1L1957.5 92.8L1971.6 86.4L1986.0 81.0L2000.7 76.5L2015.8 73.0L2031.0 70.5L2046.3 69.0L2061.7 68.5L2077.1 69.0L2092.4 70.5L2107.6 73.0L2122.7 76.5L2137.4 81.0L2151.8 86.4L2165.9 92.8L2179.4 100.1L2192.5 108.2L2205.1 117.2L2217.0 126.9L2228.2 137.5L2238.8 148.7L2248.5 160.6L2257.5 173.2L2265.6 186.2L2272.9 199.8L2279.3 213.9L2284.7 228.3L2289.2 243.0L2292.7 258.1L2295.2 273.3L2296.7 288.6Z" stroke="#161717" stroke-opacity="0.5" stroke-width="99.0" filter="url(#b14)"/>
<path d="M2297.2 304.0L2296.7 319.4L2295.2 334.7L2292.7 349.9L2289.2 365.0L2284.7 379.7L2279.3 394.1L2272.9 408.2L2265.6 421.8L2257.5 434.8L2248.5 447.4L2238.8 459.3L2228.2 470.5L2217.0 481.1L2205.1 490.8L2192.5 499.8L2179.4 507.9L2165.9 515.2L2151.8 521.6L2137.4 527.0L2122.7 531.5L2107.6 535.0L2092.4 537.5L2077.1 539.0L2061.7 539.5L2046.3 539.0L2031.0 537.5L2015.8 535.0L2000.7 531.5L1986.0 527.0L1971.6 521.6L1957.5 515.2L1943.9 507.9L1930.9 499.8L1918.3 490.8L1906.4 481.1L1895.2 470.5L1884.6 459.3L1874.9 447.4L1865.9 434.8L1857.8 421.8L1850.5 408.2L1844.1 394.1L1838.7 379.7L1834.2 365.0L1830.7 349.9L1828.2 334.7L1826.7 319.4L1826.2 304.0L1826.7 288.6L1828.2 273.3L1830.7 258.1L1834.2 243.0L1838.7 228.3L1844.1 213.9L1850.5 199.8L1857.8 186.3L1865.9 173.2L1874.9 160.6L1884.6 148.7L1895.2 137.5L1906.4 126.9L1918.3 117.2L1930.9 108.2L1943.9 100.1L1957.5 92.8L1971.6 86.4L1986.0 81.0L2000.7 76.5L2015.8 73.0L2031.0 70.5L2046.3 69.0L2061.7 68.5L2077.1 69.0L2092.4 70.5L2107.6 73.0L2122.7 76.5L2137.4 81.0L2151.8 86.4L2165.9 92.8L2179.4 100.1L2192.5 108.2L2205.1 117.2L2217.0 126.9L2228.2 137.5L2238.8 148.7L2248.5 160.6L2257.5 173.2L2265.6 186.2L2272.9 199.8L2279.3 213.9L2284.7 228.3L2289.2 243.0L2292.7 258.1L2295.2 273.3L2296.7 288.6Z" stroke="#343536" stroke-width="72.0"/>
<path d="M2297.2 304.0L2296.7 319.4L2295.2 334.7L2292.7 349.9L2289.2 365.0L2284.7 379.7L2279.3 394.1L2272.9 408.2L2265.6 421.8L2257.5 434.8L2248.5 447.4L2238.8 459.3L2228.2 470.5L2217.0 481.1L2205.1 490.8L2192.5 499.8L2179.4 507.9L2165.9 515.2L2151.8 521.6L2137.4 527.0L2122.7 531.5L2107.6 535.0L2092.4 537.5L2077.1 539.0L2061.7 539.5L2046.3 539.0L2031.0 537.5L2015.8 535.0L2000.7 531.5L1986.0 527.0L1971.6 521.6L1957.5 515.2L1943.9 507.9L1930.9 499.8L1918.3 490.8L1906.4 481.1L1895.2 470.5L1884.6 459.3L1874.9 447.4L1865.9 434.8L1857.8 421.8L1850.5 408.2L1844.1 394.1L1838.7 379.7L1834.2 365.0L1830.7 349.9L1828.2 334.7L1826.7 319.4L1826.2 304.0L1826.7 288.6L1828.2 273.3L1830.7 258.1L1834.2 243.0L1838.7 228.3L1844.1 213.9L1850.5 199.8L1857.8 186.3L1865.9 173.2L1874.9 160.6L1884.6 148.7L1895.2 137.5L1906.4 126.9L1918.3 117.2L1930.9 108.2L1943.9 100.1L1957.5 92.8L1971.6 86.4L1986.0 81.0L2000.7 76.5L2015.8 73.0L2031.0 70.5L2046.3 69.0L2061.7 68.5L2077.1 69.0L2092.4 70.5L2107.6 73.0L2122.7 76.5L2137.4 81.0L2151.8 86.4L2165.9 92.8L2179.4 100.1L2192.5 108.2L2205.1 117.2L2217.0 126.9L2228.2 137.5L2238.8 148.7L2248.5 160.6L2257.5 173.2L2265.6 186.2L2272.9 199.8L2279.3 213.9L2284.7 228.3L2289.2 243.0L2292.7 258.1L2295.2 273.3L2296.7 288.6Z" stroke="#707274" stroke-width="66.0"/>
<path d="M2302.7 304.0L2302.2 319.8L2300.7 335.5L2298.1 351.0L2294.5 366.4L2289.9 381.5L2284.4 396.2L2277.9 410.6L2270.4 424.5L2262.1 437.9L2252.9 450.7L2242.9 462.9L2232.1 474.4L2220.6 485.2L2208.4 495.2L2195.6 504.4L2182.2 512.7L2168.3 520.2L2153.9 526.7L2139.2 532.2L2124.1 536.8L2108.7 540.4L2093.2 543.0L2077.5 544.5L2061.7 545.0L2045.9 544.5L2030.2 543.0L2014.7 540.4L1999.3 536.8L1984.2 532.2L1969.5 526.7L1955.1 520.2L1941.2 512.7L1927.8 504.4L1915.0 495.2L1902.8 485.2L1891.3 474.4L1880.5 462.9L1870.5 450.7L1861.3 437.9L1853.0 424.5L1845.5 410.6L1839.0 396.2L1833.5 381.5L1828.9 366.4L1825.3 351.0L1822.7 335.5L1821.2 319.8L1820.7 304.0L1821.2 288.2L1822.7 272.5L1825.3 257.0L1828.9 241.6L1833.5 226.5L1839.0 211.8L1845.5 197.4L1853.0 183.5L1861.3 170.1L1870.5 157.3L1880.5 145.1L1891.3 133.6L1902.8 122.8L1915.0 112.8L1927.8 103.6L1941.2 95.3L1955.1 87.8L1969.5 81.3L1984.2 75.8L1999.3 71.2L2014.7 67.6L2030.2 65.0L2045.9 63.5L2061.7 63.0L2077.5 63.5L2093.2 65.0L2108.7 67.6L2124.1 71.2L2139.2 75.8L2153.9 81.3L2168.3 87.8L2182.2 95.3L2195.6 103.6L2208.4 112.8L2220.6 122.8L2232.1 133.6L2242.9 145.1L2252.9 157.3L2262.1 170.1L2270.4 183.5L2277.9 197.4L2284.4 211.8L2289.9 226.5L2294.5 241.6L2298.1 257.0L2300.7 272.5L2302.2 288.2Z" stroke="#9c9ea0" stroke-opacity="0.5" stroke-width="22.1" filter="url(#b6)"/>
<path d="M2267.7 304.0L2267.3 317.5L2265.9 330.9L2263.7 344.2L2260.7 357.3L2256.8 370.2L2252.0 382.8L2246.5 395.1L2240.1 407.0L2233.0 418.4L2225.1 429.4L2216.6 439.8L2207.4 449.7L2197.5 458.9L2187.1 467.4L2176.1 475.3L2164.7 482.4L2152.8 488.8L2140.5 494.3L2127.9 499.1L2115.0 503.0L2101.9 506.0L2088.6 508.2L2075.2 509.6L2061.7 510.0L2048.2 509.6L2034.8 508.2L2021.5 506.0L2008.4 503.0L1995.5 499.1L1982.9 494.3L1970.6 488.8L1958.7 482.4L1947.3 475.3L1936.3 467.4L1925.9 458.9L1916.0 449.7L1906.8 439.8L1898.3 429.4L1890.4 418.4L1883.3 407.0L1876.9 395.1L1871.4 382.8L1866.6 370.2L1862.7 357.3L1859.7 344.2L1857.5 330.9L1856.1 317.5L1855.7 304.0L1856.1 290.5L1857.5 277.1L1859.7 263.8L1862.7 250.7L1866.6 237.8L1871.4 225.2L1876.9 212.9L1883.3 201.0L1890.4 189.6L1898.3 178.6L1906.8 168.2L1916.0 158.3L1925.9 149.1L1936.3 140.6L1947.3 132.7L1958.7 125.6L1970.6 119.2L1982.9 113.7L1995.5 108.9L2008.4 105.0L2021.5 102.0L2034.8 99.8L2048.2 98.4L2061.7 98.0L2075.2 98.4L2088.6 99.8L2101.9 102.0L2115.0 105.0L2127.9 108.9L2140.5 113.7L2152.8 119.2L2164.7 125.6L2176.1 132.7L2187.1 140.6L2197.5 149.1L2207.4 158.3L2216.6 168.2L2225.1 178.6L2233.0 189.6L2240.1 201.0L2246.5 212.9L2252.0 225.2L2256.8 237.8L2260.7 250.7L2263.7 263.8L2265.9 277.1L2267.3 290.5Z" stroke="#262829" stroke-opacity="1" stroke-width="11.5" filter="url(#b2)"/>
<path d="M2328.7 304.0L2328.1 321.5L2326.4 338.9L2323.6 356.1L2319.6 373.1L2314.5 389.8L2308.4 406.2L2301.2 422.1L2292.9 437.5L2283.7 452.3L2273.5 466.5L2262.4 480.0L2250.5 492.8L2237.7 504.7L2224.2 515.8L2210.0 526.0L2195.2 535.2L2179.8 543.5L2163.9 550.7L2147.5 556.8L2130.8 561.9L2113.8 565.9L2096.6 568.7L2079.2 570.4L2061.7 571.0L2044.2 570.4L2026.8 568.7L2009.6 565.9L1992.6 561.9L1975.9 556.8L1959.5 550.7L1943.6 543.5L1928.2 535.2L1913.4 526.0L1899.2 515.8L1885.7 504.7L1872.9 492.8L1861.0 480.0L1849.9 466.5L1839.7 452.3L1830.5 437.5L1822.2 422.1L1815.0 406.2L1808.9 389.8L1803.8 373.1L1799.8 356.1L1797.0 338.9L1795.3 321.5L1794.7 304.0L1795.3 286.5L1797.0 269.1L1799.8 251.9L1803.8 234.9L1808.9 218.2L1815.0 201.8L1822.2 185.9L1830.5 170.5L1839.7 155.7L1849.9 141.5L1861.0 128.0L1872.9 115.2L1885.7 103.3L1899.2 92.2L1913.4 82.0L1928.2 72.8L1943.6 64.5L1959.5 57.3L1975.9 51.2L1992.6 46.1L2009.6 42.1L2026.8 39.3L2044.2 37.6L2061.7 37.0L2079.2 37.6L2096.6 39.3L2113.8 42.1L2130.8 46.1L2147.5 51.2L2163.9 57.3L2179.8 64.5L2195.2 72.8L2210.0 82.0L2224.2 92.2L2237.7 103.3L2250.5 115.2L2262.4 128.0L2273.5 141.5L2283.7 155.7L2292.9 170.5L2301.2 185.9L2308.4 201.8L2314.5 218.2L2319.6 234.9L2323.6 251.9L2326.4 269.1L2328.1 286.5Z" stroke="#2a2c2d" stroke-opacity="0.85" stroke-width="7.5" filter="url(#b2)"/>
<path d="M2191.1 884.0L2190.6 899.6L2189.1 915.1L2186.5 930.5L2183.0 945.7L2178.4 960.7L2172.9 975.3L2166.5 989.5L2159.1 1003.2L2150.9 1016.5L2141.8 1029.2L2131.9 1041.3L2121.2 1052.6L2109.9 1063.3L2097.8 1073.2L2085.1 1082.3L2071.8 1090.5L2058.1 1097.9L2043.9 1104.3L2029.3 1109.8L2014.3 1114.4L1999.1 1117.9L1983.7 1120.5L1968.2 1122.0L1952.6 1122.5L1937.0 1122.0L1921.5 1120.5L1906.1 1117.9L1890.9 1114.4L1875.9 1109.8L1861.3 1104.3L1847.1 1097.9L1833.3 1090.5L1820.1 1082.3L1807.4 1073.2L1795.3 1063.3L1784.0 1052.6L1773.3 1041.3L1763.4 1029.2L1754.3 1016.5L1746.1 1003.2L1738.7 989.5L1732.3 975.3L1726.8 960.7L1722.2 945.7L1718.7 930.5L1716.1 915.1L1714.6 899.6L1714.1 884.0L1714.6 868.4L1716.1 852.9L1718.7 837.5L1722.2 822.3L1726.8 807.3L1732.3 792.7L1738.7 778.5L1746.1 764.8L1754.3 751.5L1763.4 738.8L1773.3 726.7L1784.0 715.4L1795.3 704.7L1807.4 694.8L1820.1 685.7L1833.3 677.5L1847.1 670.1L1861.3 663.7L1875.9 658.2L1890.9 653.6L1906.1 650.1L1921.5 647.5L1937.0 646.0L1952.6 645.5L1968.2 646.0L1983.7 647.5L1999.1 650.1L2014.3 653.6L2029.3 658.2L2043.9 663.7L2058.1 670.1L2071.8 677.5L2085.1 685.7L2097.8 694.8L2109.9 704.7L2121.2 715.4L2131.9 726.7L2141.8 738.8L2150.9 751.5L2159.1 764.7L2166.5 778.5L2172.9 792.7L2178.4 807.3L2183.0 822.3L2186.5 837.5L2189.1 852.9L2190.6 868.4Z" stroke="#161717" stroke-opacity="0.5" stroke-width="93.0" filter="url(#b14)"/>
<path d="M2191.1 884.0L2190.6 899.6L2189.1 915.1L2186.5 930.5L2183.0 945.7L2178.4 960.7L2172.9 975.3L2166.5 989.5L2159.1 1003.2L2150.9 1016.5L2141.8 1029.2L2131.9 1041.3L2121.2 1052.6L2109.9 1063.3L2097.8 1073.2L2085.1 1082.3L2071.8 1090.5L2058.1 1097.9L2043.9 1104.3L2029.3 1109.8L2014.3 1114.4L1999.1 1117.9L1983.7 1120.5L1968.2 1122.0L1952.6 1122.5L1937.0 1122.0L1921.5 1120.5L1906.1 1117.9L1890.9 1114.4L1875.9 1109.8L1861.3 1104.3L1847.1 1097.9L1833.3 1090.5L1820.1 1082.3L1807.4 1073.2L1795.3 1063.3L1784.0 1052.6L1773.3 1041.3L1763.4 1029.2L1754.3 1016.5L1746.1 1003.2L1738.7 989.5L1732.3 975.3L1726.8 960.7L1722.2 945.7L1718.7 930.5L1716.1 915.1L1714.6 899.6L1714.1 884.0L1714.6 868.4L1716.1 852.9L1718.7 837.5L1722.2 822.3L1726.8 807.3L1732.3 792.7L1738.7 778.5L1746.1 764.8L1754.3 751.5L1763.4 738.8L1773.3 726.7L1784.0 715.4L1795.3 704.7L1807.4 694.8L1820.1 685.7L1833.3 677.5L1847.1 670.1L1861.3 663.7L1875.9 658.2L1890.9 653.6L1906.1 650.1L1921.5 647.5L1937.0 646.0L1952.6 645.5L1968.2 646.0L1983.7 647.5L1999.1 650.1L2014.3 653.6L2029.3 658.2L2043.9 663.7L2058.1 670.1L2071.8 677.5L2085.1 685.7L2097.8 694.8L2109.9 704.7L2121.2 715.4L2131.9 726.7L2141.8 738.8L2150.9 751.5L2159.1 764.7L2166.5 778.5L2172.9 792.7L2178.4 807.3L2183.0 822.3L2186.5 837.5L2189.1 852.9L2190.6 868.4Z" stroke="#343536" stroke-width="66.0"/>
<path d="M2191.1 884.0L2190.6 899.6L2189.1 915.1L2186.5 930.5L2183.0 945.7L2178.4 960.7L2172.9 975.3L2166.5 989.5L2159.1 1003.2L2150.9 1016.5L2141.8 1029.2L2131.9 1041.3L2121.2 1052.6L2109.9 1063.3L2097.8 1073.2L2085.1 1082.3L2071.8 1090.5L2058.1 1097.9L2043.9 1104.3L2029.3 1109.8L2014.3 1114.4L1999.1 1117.9L1983.7 1120.5L1968.2 1122.0L1952.6 1122.5L1937.0 1122.0L1921.5 1120.5L1906.1 1117.9L1890.9 1114.4L1875.9 1109.8L1861.3 1104.3L1847.1 1097.9L1833.3 1090.5L1820.1 1082.3L1807.4 1073.2L1795.3 1063.3L1784.0 1052.6L1773.3 1041.3L1763.4 1029.2L1754.3 1016.5L1746.1 1003.2L1738.7 989.5L1732.3 975.3L1726.8 960.7L1722.2 945.7L1718.7 930.5L1716.1 915.1L1714.6 899.6L1714.1 884.0L1714.6 868.4L1716.1 852.9L1718.7 837.5L1722.2 822.3L1726.8 807.3L1732.3 792.7L1738.7 778.5L1746.1 764.8L1754.3 751.5L1763.4 738.8L1773.3 726.7L1784.0 715.4L1795.3 704.7L1807.4 694.8L1820.1 685.7L1833.3 677.5L1847.1 670.1L1861.3 663.7L1875.9 658.2L1890.9 653.6L1906.1 650.1L1921.5 647.5L1937.0 646.0L1952.6 645.5L1968.2 646.0L1983.7 647.5L1999.1 650.1L2014.3 653.6L2029.3 658.2L2043.9 663.7L2058.1 670.1L2071.8 677.5L2085.1 685.7L2097.8 694.8L2109.9 704.7L2121.2 715.4L2131.9 726.7L2141.8 738.8L2150.9 751.5L2159.1 764.7L2166.5 778.5L2172.9 792.7L2178.4 807.3L2183.0 822.3L2186.5 837.5L2189.1 852.9L2190.6 868.4Z" stroke="#707274" stroke-width="60.0"/>
<path d="M2196.1 884.0L2195.6 899.9L2194.1 915.8L2191.5 931.5L2187.8 947.0L2183.2 962.3L2177.6 977.2L2171.0 991.7L2163.5 1005.8L2155.1 1019.3L2145.8 1032.3L2135.7 1044.6L2124.8 1056.2L2113.2 1067.1L2100.9 1077.2L2087.9 1086.5L2074.4 1094.9L2060.3 1102.4L2045.8 1109.0L2030.9 1114.6L2015.6 1119.2L2000.1 1122.9L1984.4 1125.5L1968.5 1127.0L1952.6 1127.5L1936.7 1127.0L1920.8 1125.5L1905.1 1122.9L1889.6 1119.2L1874.3 1114.6L1859.4 1109.0L1844.9 1102.4L1830.8 1094.9L1817.3 1086.5L1804.3 1077.2L1792.0 1067.1L1780.4 1056.2L1769.5 1044.6L1759.4 1032.3L1750.1 1019.3L1741.7 1005.8L1734.2 991.7L1727.6 977.2L1722.0 962.3L1717.4 947.0L1713.7 931.5L1711.1 915.8L1709.6 899.9L1709.1 884.0L1709.6 868.1L1711.1 852.2L1713.7 836.5L1717.4 821.0L1722.0 805.7L1727.6 790.8L1734.2 776.3L1741.7 762.2L1750.1 748.7L1759.4 735.7L1769.5 723.4L1780.4 711.8L1792.0 700.9L1804.3 690.8L1817.3 681.5L1830.8 673.1L1844.9 665.6L1859.4 659.0L1874.3 653.4L1889.6 648.8L1905.1 645.1L1920.8 642.5L1936.7 641.0L1952.6 640.5L1968.5 641.0L1984.4 642.5L2000.1 645.1L2015.6 648.8L2030.9 653.4L2045.8 659.0L2060.3 665.6L2074.4 673.1L2087.9 681.5L2100.9 690.8L2113.2 700.9L2124.8 711.8L2135.7 723.4L2145.8 735.7L2155.1 748.7L2163.5 762.2L2171.0 776.3L2177.6 790.8L2183.2 805.7L2187.8 821.0L2191.5 836.5L2194.1 852.2L2195.6 868.1Z" stroke="#9c9ea0" stroke-opacity="0.5" stroke-width="20.2" filter="url(#b6)"/>
<path d="M2164.6 884.0L2164.1 897.9L2162.8 911.7L2160.5 925.4L2157.4 938.9L2153.3 952.1L2148.5 965.1L2142.7 977.8L2136.2 990.0L2128.9 1001.8L2120.8 1013.1L2112.0 1023.8L2102.5 1033.9L2092.4 1043.4L2081.7 1052.2L2070.4 1060.3L2058.6 1067.6L2046.4 1074.1L2033.7 1079.9L2020.7 1084.7L2007.5 1088.8L1994.0 1091.9L1980.3 1094.2L1966.5 1095.5L1952.6 1096.0L1938.7 1095.5L1924.9 1094.2L1911.2 1091.9L1897.7 1088.8L1884.5 1084.7L1871.5 1079.9L1858.8 1074.1L1846.6 1067.6L1834.8 1060.3L1823.5 1052.2L1812.8 1043.4L1802.7 1033.9L1793.2 1023.8L1784.4 1013.1L1776.3 1001.8L1769.0 990.0L1762.5 977.8L1756.7 965.1L1751.9 952.1L1747.8 938.9L1744.7 925.4L1742.4 911.7L1741.1 897.9L1740.6 884.0L1741.1 870.1L1742.4 856.3L1744.7 842.6L1747.8 829.1L1751.9 815.9L1756.7 802.9L1762.5 790.2L1769.0 778.0L1776.3 766.2L1784.4 754.9L1793.2 744.2L1802.7 734.1L1812.8 724.6L1823.5 715.8L1834.8 707.7L1846.6 700.4L1858.8 693.9L1871.5 688.1L1884.5 683.3L1897.7 679.2L1911.2 676.1L1924.9 673.8L1938.7 672.5L1952.6 672.0L1966.5 672.5L1980.3 673.8L1994.0 676.1L2007.5 679.2L2020.7 683.3L2033.7 688.1L2046.4 693.9L2058.6 700.4L2070.4 707.7L2081.7 715.8L2092.4 724.6L2102.5 734.1L2112.0 744.2L2120.8 754.9L2128.9 766.2L2136.2 778.0L2142.7 790.2L2148.5 802.9L2153.3 815.9L2157.4 829.1L2160.5 842.6L2162.8 856.3L2164.1 870.1Z" stroke="#262829" stroke-opacity="1" stroke-width="11.5" filter="url(#b2)"/>
<path d="M2219.6 884.0L2219.0 901.5L2217.3 918.9L2214.5 936.1L2210.5 953.1L2205.4 969.8L2199.3 986.2L2192.1 1002.1L2183.8 1017.5L2174.6 1032.3L2164.4 1046.5L2153.3 1060.0L2141.4 1072.8L2128.6 1084.7L2115.1 1095.8L2100.9 1106.0L2086.1 1115.2L2070.7 1123.5L2054.8 1130.7L2038.4 1136.8L2021.7 1141.9L2004.7 1145.9L1987.5 1148.7L1970.1 1150.4L1952.6 1151.0L1935.1 1150.4L1917.7 1148.7L1900.5 1145.9L1883.5 1141.9L1866.8 1136.8L1850.4 1130.7L1834.5 1123.5L1819.1 1115.2L1804.3 1106.0L1790.1 1095.8L1776.6 1084.7L1763.8 1072.8L1751.9 1060.0L1740.8 1046.5L1730.6 1032.3L1721.4 1017.5L1713.1 1002.1L1705.9 986.2L1699.8 969.8L1694.7 953.1L1690.7 936.1L1687.9 918.9L1686.2 901.5L1685.6 884.0L1686.2 866.5L1687.9 849.1L1690.7 831.9L1694.7 814.9L1699.8 798.2L1705.9 781.8L1713.1 765.9L1721.4 750.5L1730.6 735.7L1740.8 721.5L1751.9 708.0L1763.8 695.2L1776.6 683.3L1790.1 672.2L1804.3 662.0L1819.1 652.8L1834.5 644.5L1850.4 637.3L1866.8 631.2L1883.5 626.1L1900.5 622.1L1917.7 619.3L1935.1 617.6L1952.6 617.0L1970.1 617.6L1987.5 619.3L2004.7 622.1L2021.7 626.1L2038.4 631.2L2054.8 637.3L2070.7 644.5L2086.1 652.8L2100.9 662.0L2115.1 672.2L2128.6 683.3L2141.4 695.2L2153.3 708.0L2164.4 721.5L2174.6 735.7L2183.8 750.5L2192.1 765.9L2199.3 781.8L2205.4 798.2L2210.5 814.9L2214.5 831.9L2217.3 849.1L2219.0 866.5Z" stroke="#2a2c2d" stroke-opacity="0.85" stroke-width="7.5" filter="url(#b2)"/>
<path d="M1662.7 495.5L1662.2 511.5L1660.7 527.4L1658.2 543.2L1654.7 558.8L1650.2 574.1L1644.8 589.1L1638.5 603.6L1631.2 617.8L1623.1 631.3L1614.1 644.3L1604.4 656.7L1593.9 668.4L1582.6 679.3L1570.8 689.5L1558.3 698.8L1545.2 707.2L1531.6 714.8L1517.6 721.4L1503.2 727.0L1488.5 731.7L1473.5 735.3L1458.4 737.9L1443.1 739.5L1427.7 740.0L1412.3 739.5L1397.0 737.9L1381.9 735.3L1366.9 731.7L1352.2 727.0L1337.8 721.4L1323.8 714.8L1310.2 707.2L1297.1 698.8L1284.6 689.5L1272.8 679.3L1261.5 668.4L1251.0 656.7L1241.3 644.3L1232.3 631.3L1224.2 617.8L1216.9 603.6L1210.6 589.1L1205.2 574.1L1200.7 558.8L1197.2 543.2L1194.7 527.4L1193.2 511.5L1192.7 495.5L1193.2 479.5L1194.7 463.6L1197.2 447.8L1200.7 432.2L1205.2 416.9L1210.6 401.9L1216.9 387.4L1224.2 373.3L1232.3 359.7L1241.3 346.7L1251.0 334.3L1261.5 322.6L1272.8 311.7L1284.6 301.5L1297.1 292.2L1310.2 283.8L1323.8 276.2L1337.8 269.6L1352.2 264.0L1366.9 259.3L1381.9 255.7L1397.0 253.1L1412.3 251.5L1427.7 251.0L1443.1 251.5L1458.4 253.1L1473.5 255.7L1488.5 259.3L1503.2 264.0L1517.6 269.6L1531.6 276.2L1545.2 283.8L1558.3 292.2L1570.8 301.5L1582.6 311.7L1593.9 322.6L1604.4 334.3L1614.1 346.7L1623.1 359.7L1631.2 373.2L1638.5 387.4L1644.8 401.9L1650.2 416.9L1654.7 432.2L1658.2 447.8L1660.7 463.6L1662.2 479.5Z" stroke="#161717" stroke-opacity="0.5" stroke-width="97.0" filter="url(#b14)"/>
<path d="M1662.7 495.5L1662.2 511.5L1660.7 527.4L1658.2 543.2L1654.7 558.8L1650.2 574.1L1644.8 589.1L1638.5 603.6L1631.2 617.8L1623.1 631.3L1614.1 644.3L1604.4 656.7L1593.9 668.4L1582.6 679.3L1570.8 689.5L1558.3 698.8L1545.2 707.2L1531.6 714.8L1517.6 721.4L1503.2 727.0L1488.5 731.7L1473.5 735.3L1458.4 737.9L1443.1 739.5L1427.7 740.0L1412.3 739.5L1397.0 737.9L1381.9 735.3L1366.9 731.7L1352.2 727.0L1337.8 721.4L1323.8 714.8L1310.2 707.2L1297.1 698.8L1284.6 689.5L1272.8 679.3L1261.5 668.4L1251.0 656.7L1241.3 644.3L1232.3 631.3L1224.2 617.8L1216.9 603.6L1210.6 589.1L1205.2 574.1L1200.7 558.8L1197.2 543.2L1194.7 527.4L1193.2 511.5L1192.7 495.5L1193.2 479.5L1194.7 463.6L1197.2 447.8L1200.7 432.2L1205.2 416.9L1210.6 401.9L1216.9 387.4L1224.2 373.3L1232.3 359.7L1241.3 346.7L1251.0 334.3L1261.5 322.6L1272.8 311.7L1284.6 301.5L1297.1 292.2L1310.2 283.8L1323.8 276.2L1337.8 269.6L1352.2 264.0L1366.9 259.3L1381.9 255.7L1397.0 253.1L1412.3 251.5L1427.7 251.0L1443.1 251.5L1458.4 253.1L1473.5 255.7L1488.5 259.3L1503.2 264.0L1517.6 269.6L1531.6 276.2L1545.2 283.8L1558.3 292.2L1570.8 301.5L1582.6 311.7L1593.9 322.6L1604.4 334.3L1614.1 346.7L1623.1 359.7L1631.2 373.2L1638.5 387.4L1644.8 401.9L1650.2 416.9L1654.7 432.2L1658.2 447.8L1660.7 463.6L1662.2 479.5Z" stroke="#343536" stroke-width="70.0"/>
<path d="M1662.7 495.5L1662.2 511.5L1660.7 527.4L1658.2 543.2L1654.7 558.8L1650.2 574.1L1644.8 589.1L1638.5 603.6L1631.2 617.8L1623.1 631.3L1614.1 644.3L1604.4 656.7L1593.9 668.4L1582.6 679.3L1570.8 689.5L1558.3 698.8L1545.2 707.2L1531.6 714.8L1517.6 721.4L1503.2 727.0L1488.5 731.7L1473.5 735.3L1458.4 737.9L1443.1 739.5L1427.7 740.0L1412.3 739.5L1397.0 737.9L1381.9 735.3L1366.9 731.7L1352.2 727.0L1337.8 721.4L1323.8 714.8L1310.2 707.2L1297.1 698.8L1284.6 689.5L1272.8 679.3L1261.5 668.4L1251.0 656.7L1241.3 644.3L1232.3 631.3L1224.2 617.8L1216.9 603.6L1210.6 589.1L1205.2 574.1L1200.7 558.8L1197.2 543.2L1194.7 527.4L1193.2 511.5L1192.7 495.5L1193.2 479.5L1194.7 463.6L1197.2 447.8L1200.7 432.2L1205.2 416.9L1210.6 401.9L1216.9 387.4L1224.2 373.3L1232.3 359.7L1241.3 346.7L1251.0 334.3L1261.5 322.6L1272.8 311.7L1284.6 301.5L1297.1 292.2L1310.2 283.8L1323.8 276.2L1337.8 269.6L1352.2 264.0L1366.9 259.3L1381.9 255.7L1397.0 253.1L1412.3 251.5L1427.7 251.0L1443.1 251.5L1458.4 253.1L1473.5 255.7L1488.5 259.3L1503.2 264.0L1517.6 269.6L1531.6 276.2L1545.2 283.8L1558.3 292.2L1570.8 301.5L1582.6 311.7L1593.9 322.6L1604.4 334.3L1614.1 346.7L1623.1 359.7L1631.2 373.2L1638.5 387.4L1644.8 401.9L1650.2 416.9L1654.7 432.2L1658.2 447.8L1660.7 463.6L1662.2 479.5Z" stroke="#707274" stroke-width="64.0"/>
<path d="M1668.1 495.5L1667.5 511.8L1666.0 528.1L1663.4 544.2L1659.9 560.1L1655.3 575.8L1649.8 591.0L1643.3 605.9L1635.9 620.4L1627.6 634.2L1618.5 647.5L1608.5 660.2L1597.7 672.1L1586.3 683.3L1574.1 693.7L1561.3 703.2L1548.0 711.8L1534.1 719.6L1519.8 726.3L1505.0 732.1L1490.0 736.8L1474.6 740.6L1459.1 743.2L1443.4 744.8L1427.7 745.4L1412.0 744.8L1396.3 743.2L1380.8 740.6L1365.4 736.8L1350.4 732.1L1335.6 726.3L1321.3 719.6L1307.4 711.8L1294.1 703.2L1281.3 693.7L1269.1 683.3L1257.7 672.1L1246.9 660.2L1236.9 647.5L1227.8 634.2L1219.5 620.4L1212.1 605.9L1205.6 591.0L1200.1 575.8L1195.5 560.1L1192.0 544.2L1189.4 528.1L1187.9 511.8L1187.3 495.5L1187.9 479.2L1189.4 462.9L1192.0 446.8L1195.5 430.9L1200.1 415.2L1205.6 400.0L1212.1 385.1L1219.5 370.6L1227.8 356.8L1236.9 343.5L1246.9 330.8L1257.7 318.9L1269.1 307.7L1281.3 297.3L1294.1 287.8L1307.4 279.2L1321.3 271.4L1335.6 264.7L1350.4 258.9L1365.4 254.2L1380.8 250.4L1396.3 247.8L1412.0 246.2L1427.7 245.6L1443.4 246.2L1459.1 247.8L1474.6 250.4L1490.0 254.2L1505.0 258.9L1519.8 264.7L1534.1 271.4L1548.0 279.2L1561.3 287.8L1574.1 297.3L1586.3 307.7L1597.7 318.9L1608.5 330.8L1618.5 343.5L1627.6 356.8L1635.9 370.6L1643.3 385.1L1649.8 400.0L1655.3 415.2L1659.9 430.9L1663.4 446.8L1666.0 462.9L1667.5 479.2Z" stroke="#9c9ea0" stroke-opacity="0.5" stroke-width="21.4" filter="url(#b6)"/>
<path d="M1634.2 495.5L1633.8 509.7L1632.4 523.8L1630.2 537.8L1627.1 551.7L1623.1 565.3L1618.3 578.5L1612.7 591.4L1606.3 603.9L1599.1 615.9L1591.2 627.4L1582.6 638.3L1573.3 648.6L1563.4 658.3L1553.0 667.2L1542.0 675.4L1530.5 682.8L1518.6 689.4L1506.4 695.2L1493.7 700.2L1480.9 704.2L1467.8 707.4L1454.5 709.7L1441.1 711.0L1427.7 711.5L1414.3 711.0L1400.9 709.7L1387.6 707.4L1374.5 704.2L1361.7 700.2L1349.0 695.2L1336.8 689.4L1324.9 682.8L1313.4 675.4L1302.4 667.2L1292.0 658.3L1282.1 648.6L1272.8 638.3L1264.2 627.4L1256.3 615.9L1249.1 603.9L1242.7 591.4L1237.1 578.5L1232.3 565.3L1228.3 551.7L1225.2 537.8L1223.0 523.8L1221.6 509.7L1221.2 495.5L1221.6 481.3L1223.0 467.2L1225.2 453.2L1228.3 439.3L1232.3 425.7L1237.1 412.5L1242.7 399.6L1249.1 387.1L1256.3 375.1L1264.2 363.6L1272.8 352.7L1282.1 342.4L1292.0 332.7L1302.4 323.8L1313.4 315.6L1324.9 308.2L1336.8 301.6L1349.0 295.8L1361.7 290.8L1374.5 286.8L1387.6 283.6L1400.9 281.3L1414.3 280.0L1427.7 279.5L1441.1 280.0L1454.5 281.3L1467.8 283.6L1480.9 286.8L1493.7 290.8L1506.4 295.8L1518.6 301.6L1530.5 308.2L1542.0 315.6L1553.0 323.8L1563.4 332.7L1573.3 342.4L1582.6 352.7L1591.2 363.6L1599.1 375.1L1606.3 387.1L1612.7 399.6L1618.3 412.5L1623.1 425.7L1627.1 439.3L1630.2 453.2L1632.4 467.2L1633.8 481.3Z" stroke="#262829" stroke-opacity="1" stroke-width="11.5" filter="url(#b2)"/>
<path d="M1693.2 495.5L1692.6 513.4L1690.9 531.2L1688.1 548.9L1684.2 566.4L1679.2 583.6L1673.1 600.3L1666.0 616.7L1657.9 632.5L1648.8 647.8L1638.7 662.4L1627.7 676.4L1615.9 689.5L1603.2 701.9L1589.8 713.3L1575.7 723.8L1560.9 733.4L1545.6 741.9L1529.7 749.4L1513.4 755.8L1496.7 761.0L1479.7 765.2L1462.5 768.1L1445.1 769.9L1427.7 770.5L1410.3 769.9L1392.9 768.1L1375.7 765.2L1358.7 761.0L1342.0 755.8L1325.7 749.4L1309.8 741.9L1294.5 733.4L1279.7 723.8L1265.6 713.3L1252.2 701.9L1239.5 689.5L1227.7 676.4L1216.7 662.4L1206.6 647.8L1197.5 632.5L1189.4 616.7L1182.3 600.3L1176.2 583.6L1171.2 566.4L1167.3 548.9L1164.5 531.2L1162.8 513.4L1162.2 495.5L1162.8 477.6L1164.5 459.8L1167.3 442.1L1171.2 424.6L1176.2 407.4L1182.3 390.7L1189.4 374.3L1197.5 358.5L1206.6 343.2L1216.7 328.6L1227.7 314.6L1239.5 301.5L1252.2 289.1L1265.6 277.7L1279.7 267.2L1294.5 257.6L1309.8 249.1L1325.7 241.6L1342.0 235.2L1358.7 230.0L1375.7 225.8L1392.9 222.9L1410.3 221.1L1427.7 220.5L1445.1 221.1L1462.5 222.9L1479.7 225.8L1496.7 230.0L1513.4 235.2L1529.7 241.6L1545.6 249.1L1560.9 257.6L1575.7 267.2L1589.8 277.7L1603.2 289.1L1615.9 301.5L1627.7 314.6L1638.7 328.6L1648.8 343.2L1657.9 358.5L1666.0 374.3L1673.1 390.7L1679.2 407.4L1684.2 424.6L1688.1 442.1L1690.9 459.8L1692.6 477.6Z" stroke="#2a2c2d" stroke-opacity="0.85" stroke-width="7.5" filter="url(#b2)"/>
<path d="M1270.0 0.0L1263.9 6.2L1257.0 12.9L1249.8 20.2L1242.6 28.1L1235.8 36.7L1229.9 45.9L1224.7 56.0L1220.0 67.1L1215.7 78.9L1211.9 90.9L1208.6 103.0L1205.8 114.7L1203.6 126.2L1202.0 137.8L1200.9 149.3L1200.2 160.9L1200.0 172.3L1200.1 183.5L1200.6 194.6L1201.4 205.7L1202.7 216.7L1204.4 227.5L1206.4 238.1L1208.9 248.4L1211.7 258.4L1214.9 268.2L1218.5 277.8L1222.5 287.2L1226.9 296.5L1231.8 305.8L1237.1 315.1L1243.0 324.3L1249.2 333.4L1255.8 342.3L1262.8 351.0L1270.0 359.3L1277.6 367.3L1285.5 375.1L1293.8 382.6L1302.3 389.8L1311.0 396.7L1319.7 403.2L1328.6 409.4L1337.6 415.3L1346.8 420.9L1356.1 426.2L1365.6 431.1L1375.1 435.7L1384.7 440.1L1394.5 444.4L1404.4 448.3L1414.4 451.7L1424.4 454.2L1434.4 455.6L1444.5 455.8L1454.8 455.1L1465.2 453.5L1475.5 451.2L1485.6 448.4L1495.5 445.3L1505.1 441.8L1514.5 437.9L1523.8 433.4L1532.9 428.4L1542.0 422.8L1550.9 416.6L1559.9 409.6L1568.8 401.9L1577.7 393.5L1586.3 384.8L1594.6 375.9L1602.5 366.9L1610.1 357.8L1617.4 348.3L1624.4 338.6L1631.1 328.8L1637.2 319.1L1642.7 309.6L1647.6 300.2L1652.0 290.9L1655.8 281.7L1659.2 272.5L1662.2 263.3L1664.8 254.2L1667.0 244.9L1668.7 235.3L1670.0 225.8L1671.0 216.6L1671.7 208.2L1672.1 200.7L1672.3 194.6L1672.4 189.8L1672.1 185.6L1671.4 181.6L1670.3 177.3L1668.6 172.0L1666.4 165.7L1663.8 158.9L1660.7 151.7L1657.1 144.3L1653.0 137.0L1648.4 129.9L1643.1 123.0L1637.1 116.2L1630.7 109.4L1623.9 102.7L1617.0 96.1L1610.2 89.8L1603.3 83.7L1596.1 77.7L1588.8 71.9L1581.6 66.2L1574.6 60.7L1568.1 55.4L1562.1 50.3L1556.6 45.4L1551.4 40.6L1546.2 36.0L1541.0 31.4L1535.6 26.8L1530.1 22.2L1524.5 17.8L1518.9 13.4L1513.2 9.0L1507.3 4.5L1501.2 0.0L1494.9 -4.7L1488.7 -9.5L1482.2 -14.3L1475.4 -19.1L1468.0 -23.7L1460.0 -28.0L1451.1 -32.3L1441.4 -36.7L1431.2 -40.9L1420.7 -44.7L1410.2 -47.8L1400.0 -50.0L1389.8 -51.3L1379.4 -51.9L1368.9 -51.8L1358.7 -51.1L1349.0 -49.8L1340.0 -48.0L1331.7 -45.4L1323.8 -42.0L1316.4 -37.9L1309.5 -33.6L1303.0 -29.2L1297.0 -25.0L1291.7 -21.2L1287.3 -17.6L1283.3 -13.9L1279.4 -10.0L1275.1 -5.4Z" stroke="#161717" stroke-opacity="0.5" stroke-width="82.0" filter="url(#b14)"/>
<path d="M1270.0 0.0L1263.9 6.2L1257.0 12.9L1249.8 20.2L1242.6 28.1L1235.8 36.7L1229.9 45.9L1224.7 56.0L1220.0 67.1L1215.7 78.9L1211.9 90.9L1208.6 103.0L1205.8 114.7L1203.6 126.2L1202.0 137.8L1200.9 149.3L1200.2 160.9L1200.0 172.3L1200.1 183.5L1200.6 194.6L1201.4 205.7L1202.7 216.7L1204.4 227.5L1206.4 238.1L1208.9 248.4L1211.7 258.4L1214.9 268.2L1218.5 277.8L1222.5 287.2L1226.9 296.5L1231.8 305.8L1237.1 315.1L1243.0 324.3L1249.2 333.4L1255.8 342.3L1262.8 351.0L1270.0 359.3L1277.6 367.3L1285.5 375.1L1293.8 382.6L1302.3 389.8L1311.0 396.7L1319.7 403.2L1328.6 409.4L1337.6 415.3L1346.8 420.9L1356.1 426.2L1365.6 431.1L1375.1 435.7L1384.7 440.1L1394.5 444.4L1404.4 448.3L1414.4 451.7L1424.4 454.2L1434.4 455.6L1444.5 455.8L1454.8 455.1L1465.2 453.5L1475.5 451.2L1485.6 448.4L1495.5 445.3L1505.1 441.8L1514.5 437.9L1523.8 433.4L1532.9 428.4L1542.0 422.8L1550.9 416.6L1559.9 409.6L1568.8 401.9L1577.7 393.5L1586.3 384.8L1594.6 375.9L1602.5 366.9L1610.1 357.8L1617.4 348.3L1624.4 338.6L1631.1 328.8L1637.2 319.1L1642.7 309.6L1647.6 300.2L1652.0 290.9L1655.8 281.7L1659.2 272.5L1662.2 263.3L1664.8 254.2L1667.0 244.9L1668.7 235.3L1670.0 225.8L1671.0 216.6L1671.7 208.2L1672.1 200.7L1672.3 194.6L1672.4 189.8L1672.1 185.6L1671.4 181.6L1670.3 177.3L1668.6 172.0L1666.4 165.7L1663.8 158.9L1660.7 151.7L1657.1 144.3L1653.0 137.0L1648.4 129.9L1643.1 123.0L1637.1 116.2L1630.7 109.4L1623.9 102.7L1617.0 96.1L1610.2 89.8L1603.3 83.7L1596.1 77.7L1588.8 71.9L1581.6 66.2L1574.6 60.7L1568.1 55.4L1562.1 50.3L1556.6 45.4L1551.4 40.6L1546.2 36.0L1541.0 31.4L1535.6 26.8L1530.1 22.2L1524.5 17.8L1518.9 13.4L1513.2 9.0L1507.3 4.5L1501.2 0.0L1494.9 -4.7L1488.7 -9.5L1482.2 -14.3L1475.4 -19.1L1468.0 -23.7L1460.0 -28.0L1451.1 -32.3L1441.4 -36.7L1431.2 -40.9L1420.7 -44.7L1410.2 -47.8L1400.0 -50.0L1389.8 -51.3L1379.4 -51.9L1368.9 -51.8L1358.7 -51.1L1349.0 -49.8L1340.0 -48.0L1331.7 -45.4L1323.8 -42.0L1316.4 -37.9L1309.5 -33.6L1303.0 -29.2L1297.0 -25.0L1291.7 -21.2L1287.3 -17.6L1283.3 -13.9L1279.4 -10.0L1275.1 -5.4Z" stroke="#343536" stroke-width="55.0"/>
<path d="M1270.0 0.0L1263.9 6.2L1257.0 12.9L1249.8 20.2L1242.6 28.1L1235.8 36.7L1229.9 45.9L1224.7 56.0L1220.0 67.1L1215.7 78.9L1211.9 90.9L1208.6 103.0L1205.8 114.7L1203.6 126.2L1202.0 137.8L1200.9 149.3L1200.2 160.9L1200.0 172.3L1200.1 183.5L1200.6 194.6L1201.4 205.7L1202.7 216.7L1204.4 227.5L1206.4 238.1L1208.9 248.4L1211.7 258.4L1214.9 268.2L1218.5 277.8L1222.5 287.2L1226.9 296.5L1231.8 305.8L1237.1 315.1L1243.0 324.3L1249.2 333.4L1255.8 342.3L1262.8 351.0L1270.0 359.3L1277.6 367.3L1285.5 375.1L1293.8 382.6L1302.3 389.8L1311.0 396.7L1319.7 403.2L1328.6 409.4L1337.6 415.3L1346.8 420.9L1356.1 426.2L1365.6 431.1L1375.1 435.7L1384.7 440.1L1394.5 444.4L1404.4 448.3L1414.4 451.7L1424.4 454.2L1434.4 455.6L1444.5 455.8L1454.8 455.1L1465.2 453.5L1475.5 451.2L1485.6 448.4L1495.5 445.3L1505.1 441.8L1514.5 437.9L1523.8 433.4L1532.9 428.4L1542.0 422.8L1550.9 416.6L1559.9 409.6L1568.8 401.9L1577.7 393.5L1586.3 384.8L1594.6 375.9L1602.5 366.9L1610.1 357.8L1617.4 348.3L1624.4 338.6L1631.1 328.8L1637.2 319.1L1642.7 309.6L1647.6 300.2L1652.0 290.9L1655.8 281.7L1659.2 272.5L1662.2 263.3L1664.8 254.2L1667.0 244.9L1668.7 235.3L1670.0 225.8L1671.0 216.6L1671.7 208.2L1672.1 200.7L1672.3 194.6L1672.4 189.8L1672.1 185.6L1671.4 181.6L1670.3 177.3L1668.6 172.0L1666.4 165.7L1663.8 158.9L1660.7 151.7L1657.1 144.3L1653.0 137.0L1648.4 129.9L1643.1 123.0L1637.1 116.2L1630.7 109.4L1623.9 102.7L1617.0 96.1L1610.2 89.8L1603.3 83.7L1596.1 77.7L1588.8 71.9L1581.6 66.2L1574.6 60.7L1568.1 55.4L1562.1 50.3L1556.6 45.4L1551.4 40.6L1546.2 36.0L1541.0 31.4L1535.6 26.8L1530.1 22.2L1524.5 17.8L1518.9 13.4L1513.2 9.0L1507.3 4.5L1501.2 0.0L1494.9 -4.7L1488.7 -9.5L1482.2 -14.3L1475.4 -19.1L1468.0 -23.7L1460.0 -28.0L1451.1 -32.3L1441.4 -36.7L1431.2 -40.9L1420.7 -44.7L1410.2 -47.8L1400.0 -50.0L1389.8 -51.3L1379.4 -51.9L1368.9 -51.8L1358.7 -51.1L1349.0 -49.8L1340.0 -48.0L1331.7 -45.4L1323.8 -42.0L1316.4 -37.9L1309.5 -33.6L1303.0 -29.2L1297.0 -25.0L1291.7 -21.2L1287.3 -17.6L1283.3 -13.9L1279.4 -10.0L1275.1 -5.4Z" stroke="#707274" stroke-width="49.0"/>
<path d="M1267.0 -2.9L1261.0 3.2L1254.1 10.0L1246.8 17.3L1239.4 25.4L1232.4 34.3L1226.3 43.8L1221.0 54.3L1216.1 65.6L1211.8 77.5L1207.9 89.7L1204.5 101.9L1201.7 113.8L1199.5 125.5L1197.9 137.3L1196.7 149.0L1196.1 160.7L1195.8 172.2L1195.9 183.6L1196.4 194.9L1197.3 206.1L1198.6 217.2L1200.3 228.2L1202.4 238.9L1204.9 249.4L1207.7 259.7L1211.0 269.6L1214.6 279.4L1218.7 288.9L1223.2 298.4L1228.2 307.8L1233.6 317.2L1239.5 326.6L1245.8 335.8L1252.6 344.9L1259.6 353.6L1266.9 362.1L1274.6 370.2L1282.7 378.1L1291.0 385.7L1299.6 393.0L1308.4 399.9L1317.3 406.6L1326.2 412.9L1335.4 418.9L1344.7 424.5L1354.1 429.9L1363.7 434.9L1373.3 439.5L1383.0 443.9L1392.9 448.2L1403.0 452.2L1413.2 455.7L1423.6 458.3L1434.1 459.7L1444.6 460.0L1455.3 459.2L1466.0 457.6L1476.5 455.3L1486.8 452.4L1496.8 449.2L1506.6 445.7L1516.2 441.7L1525.7 437.1L1535.0 432.0L1544.2 426.3L1553.4 419.9L1562.5 412.8L1571.6 405.0L1580.6 396.5L1589.3 387.7L1597.7 378.7L1605.7 369.6L1613.3 360.4L1620.7 350.8L1627.8 341.0L1634.5 331.1L1640.7 321.3L1646.3 311.6L1651.3 302.1L1655.8 292.6L1659.7 283.2L1663.1 273.8L1666.2 264.5L1668.8 255.3L1671.1 245.7L1672.8 236.0L1674.2 226.3L1675.2 217.0L1675.8 208.4L1676.3 200.9L1676.5 194.7L1676.5 189.7L1676.2 185.2L1675.5 180.8L1674.3 176.1L1672.5 170.7L1670.3 164.3L1667.6 157.3L1664.5 149.9L1660.8 142.4L1656.6 134.8L1651.8 127.5L1646.3 120.4L1640.2 113.4L1633.6 106.5L1626.8 99.7L1619.9 93.1L1613.0 86.7L1606.0 80.5L1598.7 74.5L1591.4 68.6L1584.1 63.0L1577.2 57.5L1570.8 52.2L1564.9 47.1L1559.4 42.3L1554.2 37.5L1549.0 32.9L1543.7 28.2L1538.3 23.6L1532.7 19.0L1527.1 14.5L1521.5 10.1L1515.8 5.6L1509.8 1.2L1503.7 -3.3L1497.5 -8.0L1491.2 -12.8L1484.6 -17.7L1477.7 -22.5L1470.1 -27.3L1461.9 -31.7L1452.8 -36.1L1443.0 -40.5L1432.7 -44.8L1422.0 -48.6L1411.3 -51.8L1400.7 -54.1L1390.2 -55.4L1379.5 -56.0L1368.8 -56.0L1358.3 -55.3L1348.3 -53.9L1339.0 -52.0L1330.2 -49.3L1322.0 -45.7L1314.3 -41.5L1307.2 -37.1L1300.7 -32.6L1294.6 -28.4L1289.2 -24.5L1284.6 -20.7L1280.4 -16.9L1276.4 -12.8L1272.0 -8.3Z" stroke="#9c9ea0" stroke-opacity="0.5" stroke-width="16.6" filter="url(#b6)"/>
<path d="M1285.1 14.6L1278.7 21.1L1271.8 27.8L1265.0 34.7L1258.6 41.7L1252.9 48.9L1248.1 56.3L1243.8 64.9L1239.5 74.9L1235.6 85.7L1232.0 96.9L1228.9 108.2L1226.3 119.1L1224.3 129.6L1222.9 140.2L1221.8 150.9L1221.2 161.7L1221.0 172.4L1221.1 183.0L1221.5 193.4L1222.3 203.7L1223.5 213.8L1225.1 223.9L1227.0 233.6L1229.2 243.1L1231.8 252.3L1234.7 261.3L1238.0 270.0L1241.7 278.6L1245.7 287.1L1250.2 295.7L1255.1 304.2L1260.5 312.7L1266.3 321.2L1272.5 329.5L1278.9 337.5L1285.6 345.2L1292.5 352.6L1299.9 359.8L1307.6 366.8L1315.6 373.5L1323.8 380.0L1332.0 386.2L1340.3 392.0L1348.8 397.6L1357.4 402.8L1366.2 407.8L1375.0 412.4L1384.0 416.7L1393.3 420.9L1402.6 425.0L1411.6 428.6L1420.3 431.5L1428.4 433.6L1436.1 434.7L1444.0 434.9L1452.5 434.2L1461.3 432.8L1470.4 430.8L1479.7 428.3L1488.8 425.4L1497.5 422.3L1505.9 418.7L1514.2 414.7L1522.3 410.3L1530.4 405.3L1538.4 399.7L1546.5 393.4L1554.7 386.3L1563.0 378.5L1571.1 370.3L1579.0 361.8L1586.5 353.3L1593.7 344.6L1600.6 335.7L1607.3 326.5L1613.5 317.3L1619.2 308.3L1624.3 299.5L1628.8 290.9L1632.7 282.4L1636.3 274.0L1639.4 265.6L1642.1 257.1L1644.5 248.9L1646.4 240.6L1648.0 232.0L1649.2 223.2L1650.1 214.7L1650.7 206.7L1651.1 199.7L1651.3 194.2L1651.4 190.4L1651.2 188.1L1650.9 186.0L1650.1 183.1L1648.7 178.7L1646.7 173.0L1644.3 166.8L1641.6 160.4L1638.5 154.0L1635.0 147.8L1631.3 142.1L1626.9 136.4L1621.6 130.3L1615.7 124.1L1609.3 117.8L1602.6 111.4L1596.1 105.3L1589.6 99.6L1582.9 94.0L1575.8 88.4L1568.6 82.7L1561.4 77.1L1554.6 71.5L1548.3 66.1L1542.6 61.0L1537.3 56.2L1532.2 51.7L1527.3 47.3L1522.1 42.9L1516.8 38.5L1511.4 34.2L1506.0 29.9L1500.5 25.7L1494.8 21.4L1488.7 16.9L1482.3 12.1L1476.0 7.3L1469.9 2.7L1463.8 -1.5L1457.5 -5.5L1450.5 -9.3L1442.2 -13.3L1433.1 -17.4L1423.6 -21.3L1414.1 -24.7L1405.0 -27.5L1396.4 -29.3L1387.9 -30.4L1378.9 -30.9L1369.7 -30.8L1360.8 -30.2L1352.5 -29.1L1345.2 -27.7L1339.0 -25.7L1333.1 -23.1L1327.0 -19.8L1321.0 -16.0L1314.9 -11.9L1309.1 -7.9L1304.5 -4.5L1301.0 -1.7L1297.9 1.2L1294.5 4.6L1290.4 9.0Z" stroke="#262829" stroke-opacity="1" stroke-width="11.5" filter="url(#b2)"/>
<path d="M1253.5 -16.0L1247.7 -10.1L1240.8 -3.4L1233.1 4.4L1225.0 13.3L1217.1 23.3L1209.9 34.5L1203.9 46.3L1198.6 58.7L1193.9 71.4L1189.8 84.4L1186.3 97.3L1183.3 109.9L1180.9 122.5L1179.2 135.1L1178.0 147.6L1177.3 160.0L1177.0 172.1L1177.1 184.1L1177.6 196.0L1178.5 207.9L1179.9 219.7L1181.7 231.4L1184.0 242.9L1186.6 254.2L1189.7 265.1L1193.2 275.8L1197.2 286.3L1201.5 296.7L1206.4 306.8L1211.7 316.9L1217.5 327.0L1223.8 336.9L1230.5 346.8L1237.6 356.4L1245.1 365.7L1252.9 374.7L1261.2 383.4L1269.7 391.8L1278.6 399.9L1287.7 407.5L1296.9 414.9L1306.2 421.8L1315.6 428.5L1325.3 434.8L1335.2 440.8L1345.2 446.4L1355.3 451.7L1365.4 456.5L1375.3 461.1L1385.6 465.6L1396.5 469.9L1407.9 473.7L1419.9 476.7L1432.5 478.5L1445.1 478.8L1457.5 477.9L1469.4 476.1L1481.0 473.5L1492.1 470.5L1502.9 467.1L1513.5 463.3L1524.0 458.8L1534.3 453.9L1544.5 448.3L1554.6 442.0L1564.5 435.1L1574.5 427.4L1584.2 418.9L1593.7 410.0L1602.9 400.7L1611.7 391.3L1620.0 381.8L1628.0 372.2L1635.8 362.1L1643.3 351.8L1650.3 341.4L1656.9 331.0L1662.8 320.7L1668.2 310.4L1673.0 300.2L1677.2 290.1L1680.9 280.0L1684.2 270.0L1687.1 260.0L1689.5 249.6L1691.4 238.9L1692.9 228.6L1693.9 218.7L1694.6 209.7L1695.1 201.8L1695.3 195.2L1695.3 189.1L1694.9 183.0L1693.9 176.8L1692.4 170.8L1690.4 164.7L1688.0 157.8L1685.1 150.2L1681.6 142.1L1677.5 133.6L1672.7 125.1L1667.2 116.6L1660.9 108.5L1654.1 100.7L1647.1 93.3L1639.9 86.1L1632.8 79.4L1625.7 72.8L1618.3 66.2L1610.6 59.8L1603.0 53.8L1595.8 48.1L1589.0 42.8L1582.9 37.8L1577.3 33.0L1572.0 28.2L1566.8 23.5L1561.5 18.8L1556.1 14.0L1550.3 9.1L1544.6 4.4L1538.9 -0.2L1533.1 -4.8L1527.2 -9.3L1521.1 -13.9L1514.9 -18.5L1508.8 -23.0L1502.5 -27.8L1495.7 -32.9L1488.1 -38.3L1479.6 -43.6L1470.4 -48.5L1460.8 -53.1L1450.5 -57.8L1439.5 -62.3L1427.9 -66.5L1416.0 -70.1L1403.9 -72.7L1391.9 -74.2L1379.9 -74.9L1368.1 -74.8L1356.5 -74.0L1345.2 -72.5L1334.3 -70.3L1323.6 -67.0L1313.7 -62.6L1304.8 -57.8L1296.9 -52.9L1290.0 -48.2L1283.7 -43.8L1277.8 -39.5L1272.3 -35.0L1267.4 -30.5L1262.8 -25.9L1258.3 -21.2Z" stroke="#2a2c2d" stroke-opacity="0.85" stroke-width="7.5" filter="url(#b2)"/>
</g>
<g fill="none" stroke="#141516" stroke-width="2.6" stroke-linecap="round" stroke-linejoin="round" opacity="0.9"><path d="M958 281L969 286L975 300L970 312L974 326M969 300L948 306L930 301"/><path d="M262 812L274 806L270 822L264 829"/><path d="M1316 668L1308 690L1303 712L1306 727"/><path d="M1645 551L1649 575L1644 596L1651 613"/><path d="M1429 228L1470 242L1520 268L1560 300L1583 322L1598 338M1583 322L1571 332"/><path d="M803 792L822 775L840 762L852 755M806 786L790 780L770 779"/><path d="M1058 636L1080 640L1100 651"/><path d="M1545 28L1560 44L1578 56M1552 50L1570 62"/><path d="M1868 480L1880 505L1892 520"/></g>
<g fill="none" stroke="#c4c7ca" stroke-width="7" stroke-linecap="round" opacity="0.55" filter="url(#b2)"><path d="M1318 722Q1400 752 1490 738"/><path d="M1500 262Q1545 285 1575 320"/><path d="M30 745Q120 735 200 770"/><path d="M652 440Q628 520 632 620" stroke-width="4"/><path d="M1030 330Q1060 380 1085 460" stroke-width="4"/></g>
<rect width="1940" height="1080" filter="url(#nz)" opacity="0.11"/>
</svg>
<!--IMGEND-->
<!--RIGHT-->
<div class="pbtn" style="left:2434px;top:208px;width:465px;height:100px;border-radius:18px"></div>
<div class="abs" style="left:2839px;top:208px;width:2px;height:100px;background:#8a52dc"></div>
<svg style="left:2554px;top:244px" width="34" height="28" viewBox="0 0 34 28"><g fill="none" stroke="#fff" stroke-width="2.800" stroke-linejoin="round"><path d="M2 6.500H9L11.500 1.500H22.500L25 6.500H32V26.500H2Z"/><circle cx="17" cy="15.500" r="4.800"/></g></svg>
<span class="t" id="cap" style="letter-spacing:-0.27px;;;;left:2605px;top:243px;font-size:32.5px;color:#fff">Capture</span>
<svg style="left:2858px;top:250px" width="22" height="16" viewBox="0 0 22 16"><path d="M1.500 2L11 13L20.500 2" fill="none" stroke="#fff" stroke-width="2.600"/></svg>
<div class="abs" style="left:2920px;top:208px;width:464px;height:100px;border-radius:18px;background:#fff;border:2px solid #d9d9d9;box-shadow:0 3px 0 rgba(0,0,0,0.03)"></div>
<div class="abs" style="left:3324px;top:210px;width:2px;height:100px;background:#d9d9d9"></div>
<svg style="left:2990px;top:243px" width="31" height="30" viewBox="0 0 31 30"><g fill="none" stroke="#1f1f1f" stroke-width="2.800"><path d="M13 1.500H1.500V28H28.500V17"/><path d="M28.500 1.500L16.500 13.500"/></g><path d="M14 8.500V16H21.500Z" fill="#1f1f1f" stroke="#1f1f1f" stroke-width="1.500"/></svg>
<span class="t" id="imp" style="letter-spacing:0.06px;;;;left:3038px;top:243px;font-size:32.5px;color:#1f1f1f">Import Capture</span>
<svg style="left:3343px;top:250px" width="22" height="16" viewBox="0 0 22 16"><path d="M1.500 2L11 13L20.500 2" fill="none" stroke="#1f1f1f" stroke-width="2.600"/></svg>

<div class="card" style="left:2434px;top:325px;width:950px;height:189px"></div>
<span class="t" id="nav" style="letter-spacing:0.43px;;;;left:2459px;top:348px;font-size:28.5px;-webkit-text-stroke:0.55px #1f1f1f;color:#1f1f1f">Navigation</span>
<span class="t" id="tc" style="letter-spacing:0.21px;;;;left:3140px;top:348px;font-size:28.5px;color:#1f1f1f">Total Captures: <b>2</b></span>
<div class="hl" style="left:2434px;top:400px;width:950px"></div>
<div class="dis" style="left:2458px;top:426px;width:278px;height:64px;background:#f5f5f5"></div>
<svg style="left:2491px;top:446px" width="26" height="24" viewBox="0 0 26 24"><g fill="none" stroke="#b5b5b5" stroke-width="2.200"><rect x="1.500" y="1.500" width="9" height="8.500"/><rect x="15" y="1.500" width="9" height="8.500"/><rect x="1.500" y="14" width="9" height="8.500"/><rect x="15" y="14" width="9" height="8.500"/></g></svg>
<span class="t dtx" id="roi" style="letter-spacing:-0.24px;;;;left:2534px;top:444px;font-size:28.5px">View All ROIs</span>
<div class="pbtn" style="left:3017px;top:426px;width:189px;height:64px"></div>
<svg style="left:3034px;top:446px" width="16" height="24" viewBox="0 0 16 24"><path d="M13.500 1.500L2.500 12L13.500 22.500" fill="none" stroke="#fff" stroke-width="2.800"/></svg>
<span class="t" id="prev" style="letter-spacing:-0.14px;;;;left:3074px;top:444px;font-size:28.5px;color:#fff">Previous</span>
<div class="pbtn" style="left:3222px;top:426px;width:138px;height:64px"></div>
<span class="t" id="next" style="letter-spacing:-0.18px;;;;left:3235px;top:444px;font-size:28.5px;color:#fff">Next</span>
<svg style="left:3317px;top:446px" width="16" height="24" viewBox="0 0 16 24"><path d="M2.500 1.500L13.500 12L2.500 22.500" fill="none" stroke="#fff" stroke-width="2.800"/></svg>

<div class="card" style="left:2434px;top:530px;width:950px;height:396px"></div>
<span class="t" id="ity" style="letter-spacing:0.64px;;;;left:2459px;top:554px;font-size:28.5px;-webkit-text-stroke:0.55px #1f1f1f;color:#1f1f1f">Inspection Types</span>
<svg style="left:2691px;top:555px" width="28" height="28" viewBox="0 0 28 28"><circle cx="14" cy="14" r="12.300" fill="none" stroke="#1f1f1f" stroke-width="2.400"/><path d="M14 12.500V20.500" stroke="#1f1f1f" stroke-width="2.600"/><circle cx="14" cy="8.300" r="1.700" fill="#1f1f1f"/></svg>
<div class="hl" style="left:2434px;top:606px;width:950px"></div>
<span class="t" id="vdc" style="letter-spacing:0.01px;;;;left:2459px;top:640px;font-size:28.5px;color:#1f1f1f">Visual and Dimension Check</span>
<svg style="left:3259px;top:643px" width="28" height="28" viewBox="0 0 28 28"><path d="M18.500 2.500L23.500 7.500L9.500 21L4 22L5 16.500Z M1.500 26H26" fill="none" stroke="#722ed1" stroke-width="2.500" stroke-linejoin="round"/></svg>
<span class="t" id="edt" style="letter-spacing:-0.33px;;;;left:3295px;top:642px;font-size:28.5px;color:#722ed1">Edit</span>
<div class="abs" style="left:2458px;top:690px;width:902px;height:60px;border-radius:22px 10px 10px 22px;background:#fff;border:1.500px solid #d4d4d4"></div>
<div class="abs" style="left:2458px;top:690px;width:832px;height:60px;border-radius:22px 0 0 22px;background:#eb0000"></div>
<span class="t" style="left:3317px;top:707px;font-size:28.5px;color:#1f1f1f">0</span>
<div class="abs" style="left:2458px;top:766px;width:902px;height:60px;border-radius:22px 10px 10px 22px;background:#fff;border:1.500px solid #d4d4d4"></div>
<div class="abs" style="left:2458px;top:766px;width:832px;height:60px;border-radius:22px 0 0 22px;background:#056c7b"></div>
<span class="t" style="left:3317px;top:783px;font-size:28.5px;color:#1f1f1f">0</span>
<div class="abs" style="left:2458px;top:842px;width:902px;height:60px;border-radius:22px 10px 10px 22px;background:#fff;border:1.500px solid #d4d4d4"></div>
<div class="abs" style="left:2458px;top:842px;width:832px;height:60px;border-radius:22px 0 0 22px;background:#fccc00"></div>
<span class="t" style="left:3317px;top:859px;font-size:28.5px;color:#1f1f1f">0</span>
<span class="t" id="r1a" style="letter-spacing:0.34px;;;;left:2479px;top:706px;font-size:28.5px;color:#fff">Defect</span>
<span class="t mono" id="r1b" style="right:151px;top:707.500px;font-size:28.05px;color:#fff">defect_visual_and_dimension_check</span>
<span class="t" id="r2a" style="left:2479px;top:772px;font-size:28.5px;color:#fff;line-height:25px">Point-to-<br>point</span>
<span class="t mono" id="r2b" style="right:151px;top:772.500px;font-size:28.05px;color:#fff;line-height:25px;text-align:right">point-to-<br>point_visual_and_dimension_check</span>
<span class="t" id="r3a" style="left:2479px;top:848px;font-size:28.5px;color:#3a3a3a;line-height:25px">Area<br>Check</span>
<span class="t mono" id="r3b" style="right:151px;top:848.500px;font-size:28.05px;color:#3a3a3a;line-height:25px;text-align:right">area_check_visual_and_dimension_chec<br>k</span>
<div class="hl" style="left:2434px;top:956px;width:950px;background:#e6e6e6"></div>
<div class="pbtn" style="left:2434px;top:990px;width:950px;height:80px;border-radius:18px"></div>
<span class="t" id="trn" style="letter-spacing:-0.1px;;;;left:2720px;top:1015.500px;font-size:32.5px;color:#fff">Train Segmentation Model</span>
<div class="dis" style="left:2434px;top:1086px;width:467px;height:63px"></div>
<div class="abs" style="left:2515px;top:1102px;width:32px;height:32px;border-radius:7px;background:#e3e1e6;border:2px solid #dcdcdc"></div>
<span class="t dtx" id="lpm" style="letter-spacing:-0.08px;;;;left:2563px;top:1104px;font-size:28.5px">Live Preview Mode</span>
<div class="dis" style="left:2917px;top:1086px;width:467px;height:63px"></div>
<span class="t dtx" id="tst" style="letter-spacing:0.0px;;;;left:3124px;top:1104px;font-size:28.5px">Test</span>
<div class="hl" style="left:2434px;top:1180px;width:950px;background:#e6e6e6"></div>

<div class="card" style="left:2434px;top:1212px;width:950px;height:588px;background:#fafafa"></div>
<span class="t" id="rts" style="letter-spacing:0.47px;;;;left:2459px;top:1236.0px;font-size:28.5px;-webkit-text-stroke:0.55px #8c8c8c;color:#8c8c8c">Runtime Settings</span>
<svg style="left:2692px;top:1236px" width="28" height="28" viewBox="0 0 28 28"><circle cx="14" cy="14" r="12.300" fill="none" stroke="#8c8c8c" stroke-width="2.400"/><path d="M14 12.500V20.500" stroke="#8c8c8c" stroke-width="2.600"/><circle cx="14" cy="8.300" r="1.700" fill="#8c8c8c"/></svg>
<div class="hl" style="left:2434px;top:1288px;width:950px;background:#efefef"></div>
<span class="t" id="cst" style="letter-spacing:0.19px;;;;left:2459px;top:1322.0px;font-size:28.5px;color:#8f8f8f">Confidence Score Threshold</span>
<div class="cb" style="left:2846px;top:1321px;width:31px;height:31px"></div>
<svg style="left:2885px;top:1322px" width="29" height="29" viewBox="0 0 29 29"><circle cx="14.500" cy="14.500" r="12.500" fill="none" stroke="#c4c4c4" stroke-width="2.200"/><path d="M10.500 11.500a4 4 0 1 1 5.500 3.700c-1 .5-1.500 1.200-1.500 2.300" fill="none" stroke="#c4c4c4" stroke-width="2.200"/><circle cx="14.500" cy="21" r="1.400" fill="#c4c4c4"/></svg>
<div class="abs" style="left:2467px;top:1405px;width:352px;height:6px;border-radius:3px;background:#ebebeb"></div>
<div class="abs" style="left:2819px;top:1405px;width:352px;height:6px;border-radius:3px;background:#f3f3f3"></div>
<div class="abs" style="left:2460px;top:1401px;width:14px;height:14px;border-radius:50%;background:#fafafa;border:3px solid #eeeeee"></div>
<div class="abs" style="left:3163px;top:1401px;width:14px;height:14px;border-radius:50%;background:#fafafa;border:3px solid #f0f0f0"></div>
<div class="abs" style="left:2805px;top:1394px;width:28px;height:28px;border-radius:50%;background:#fafafa;border:4px solid #cfcfcf"></div>
<span class="t" id="sl0" style="left:2460px;top:1428px;font-size:28.5px;color:#8f8f8f">0</span>
<span class="t" id="sl1" style="left:3163px;top:1428px;font-size:28.5px;color:#c8c8c8">1</span>
<div class="inp" style="left:3200px;top:1395px;width:160px;height:63.500px"></div>
<span class="t" id="v05" style="letter-spacing:-0.54px;;;;left:3225px;top:1413px;font-size:28.5px;color:#c8c8c8">0.5</span>
<span class="t" id="lba" style="letter-spacing:0.09px;;;;left:2459px;top:1568.0px;font-size:28.5px;color:#8f8f8f">Limit Blob Area</span>
<div class="cb" style="left:2673px;top:1567px;width:31px;height:31px"></div>
<svg style="left:2713px;top:1568px" width="29" height="29" viewBox="0 0 29 29"><circle cx="14.500" cy="14.500" r="12.500" fill="none" stroke="#c4c4c4" stroke-width="2.200"/><path d="M10.500 11.500a4 4 0 1 1 5.500 3.700c-1 .5-1.500 1.200-1.500 2.300" fill="none" stroke="#c4c4c4" stroke-width="2.200"/><circle cx="14.500" cy="21" r="1.400" fill="#c4c4c4"/></svg>
<span class="t" id="mn" style="letter-spacing:-0.26px;;;;left:2459px;top:1628.0px;font-size:28.5px;color:#8f8f8f">Min:</span>
<span class="t" id="mx" style="letter-spacing:-0.54px;;;;left:2922px;top:1628.0px;font-size:28.5px;color:#8f8f8f">Max:</span>
<div class="inp" style="left:2458px;top:1664px;width:439px;height:63.500px"></div>
<div class="inp" style="left:2921px;top:1664px;width:439px;height:63.500px"></div>
<span class="t" id="mnb" style="letter-spacing:0.04px;;;;left:2482px;top:1681.5px;font-size:28.5px;color:#d0d0d0">Min Blob Area</span>
<span class="t" id="mxb" style="letter-spacing:0.05px;;;;left:2945px;top:1681.5px;font-size:28.5px;color:#d0d0d0">Max Blob Area</span>
<div class="hl" style="left:2434px;top:1829px;width:950px;background:#e6e6e6"></div>
<div class="abs" style="left:3292px;top:1786px;width:80px;height:80px;border-radius:50%;background:#722ed1;box-shadow:0 8px 24px rgba(0,0,0,0.18),0 2px 6px rgba(0,0,0,0.10)"></div>
<svg style="left:3314px;top:1808px" width="36" height="36" viewBox="0 0 36 36"><circle cx="18" cy="18" r="15.500" fill="none" stroke="#fff" stroke-width="2.800"/><path d="M12.800 14.200a5.200 5.200 0 1 1 7.300 4.800c-1.400.7-2.100 1.600-2.100 3.200" fill="none" stroke="#fff" stroke-width="2.800"/><circle cx="18" cy="26.300" r="1.800" fill="#fff"/></svg>
<!--CHROME-->
<div class="abs" style="left:0;top:0;width:2px;height:1962px;background:#34475a"></div>
<div class="abs" style="left:0;top:1960px;width:450px;height:2px;background:#34475a"></div>
<div class="abs" style="left:3418px;top:0;width:2px;height:84px;background:#2f4256"></div>
<svg style="left:0;top:1942px" width="20" height="20" viewBox="0 0 20 20"><path d="M0 0V20H20A20 20 0 0 1 0 0Z" fill="#0c0d0e"/><path d="M1 0A19 19 0 0 0 20 19" fill="none" stroke="#34475a" stroke-width="2"/></svg>
<svg style="left:3396px;top:1938px" width="24" height="24" viewBox="0 0 24 24"><path d="M24 0V24H0A24 24 0 0 0 24 0Z" fill="#2a2c2c"/></svg>
</body>
</html>
